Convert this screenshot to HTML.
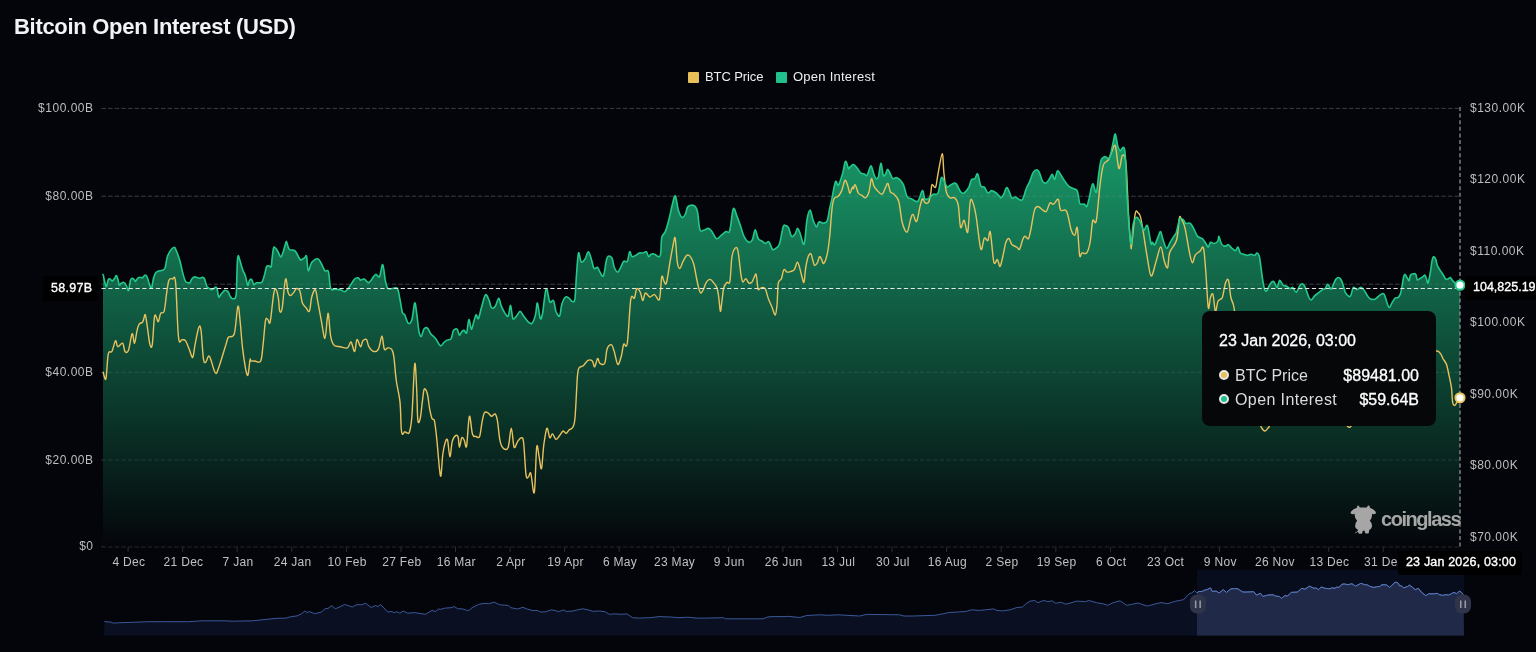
<!DOCTYPE html>
<html><head><meta charset="utf-8">
<style>
html,body{margin:0;padding:0;background:#04050a;width:1536px;height:652px;overflow:hidden;position:relative;font-family:"Liberation Sans",sans-serif;}
.t{position:absolute;white-space:nowrap;}
svg{will-change:transform}
.t{will-change:transform}
</style></head><body>
<svg width="1536" height="652" viewBox="0 0 1536 652" style="position:absolute;left:0;top:0">
<defs>
<linearGradient id="g" x1="0" y1="133" x2="0" y2="547" gradientUnits="userSpaceOnUse">
<stop offset="0" stop-color="#199c6b"/>
<stop offset="1" stop-color="#04050a"/>
</linearGradient>
<clipPath id="selclip"><rect x="1197" y="570" width="267" height="66"/></clipPath>
</defs>
<line x1="101.5" y1="108.40" x2="1460" y2="108.40" stroke="#27292e" stroke-width="1" stroke-dasharray="4.5,2.1"/>
<line x1="101.5" y1="196.20" x2="1460" y2="196.20" stroke="#27292e" stroke-width="1" stroke-dasharray="4.5,2.1"/>
<line x1="101.5" y1="284.20" x2="1460" y2="284.20" stroke="#27292e" stroke-width="1" stroke-dasharray="4.5,2.1"/>
<line x1="101.5" y1="372.30" x2="1460" y2="372.30" stroke="#27292e" stroke-width="1" stroke-dasharray="4.5,2.1"/>
<line x1="101.5" y1="460.00" x2="1460" y2="460.00" stroke="#27292e" stroke-width="1" stroke-dasharray="4.5,2.1"/>
<line x1="101.5" y1="546.80" x2="1460" y2="546.80" stroke="#27292e" stroke-width="1" stroke-dasharray="4.5,2.1"/>
<path d="M103.0,275.0 C103.0,275.0 102.9,273.6 103.2,275.0 C103.6,276.4 104.5,281.4 105.1,283.3 C105.6,285.2 105.9,287.1 106.4,286.5 C107.0,285.9 107.7,280.8 108.3,279.6 C108.9,278.4 109.4,278.9 110.1,279.1 C110.8,279.4 111.7,281.1 112.4,281.0 C113.2,280.8 114.1,279.1 114.7,278.2 C115.4,277.3 115.9,275.2 116.4,275.5 C116.9,275.7 117.5,278.0 118.0,279.6 C118.4,281.2 118.8,284.5 119.3,285.1 C119.9,285.7 120.4,283.7 121.2,283.3 C121.9,282.8 123.1,282.1 123.9,282.4 C124.8,282.7 125.5,283.7 126.2,285.1 C127.0,286.5 127.9,291.4 128.5,290.6 C129.2,289.9 129.8,282.6 130.4,280.5 C131.0,278.4 131.6,278.4 132.2,278.2 C132.8,278.1 133.5,279.1 134.1,279.6 C134.6,280.1 134.9,281.6 135.5,281.4 C136.0,281.3 136.6,279.4 137.3,278.7 C138.0,278.0 138.8,277.4 139.6,277.3 C140.4,277.1 141.4,278.1 142.4,277.8 C143.3,277.4 144.4,275.1 145.1,275.0 C145.9,274.8 146.2,275.1 147.0,276.8 C147.7,278.5 149.0,283.3 149.7,285.1 C150.5,287.0 151.0,289.0 151.6,287.9 C152.2,286.8 152.8,281.1 153.4,278.7 C154.0,276.3 154.5,274.8 155.2,273.6 C156.0,272.4 156.6,271.9 158.0,271.3 C159.4,270.7 162.3,270.7 163.5,269.9 C164.8,269.2 164.7,269.1 165.4,266.7 C166.1,264.3 166.3,258.9 167.7,255.7 C169.1,252.4 172.2,248.1 173.7,247.4 C175.1,246.6 175.4,248.7 176.4,251.0 C177.5,253.4 178.9,257.5 180.0,261.2 C181.1,264.9 181.8,269.8 182.8,273.1 C183.7,276.5 184.6,279.8 185.5,281.4 C186.4,283.0 187.5,282.7 188.3,282.8 C189.1,283.0 189.5,283.0 190.1,282.4 C190.7,281.7 191.2,279.6 192.0,278.7 C192.7,277.8 193.7,277.0 194.7,276.8 C195.7,276.7 197.0,277.5 198.0,277.8 C198.9,278.0 199.5,278.3 200.3,278.2 C201.0,278.1 201.9,277.2 202.6,277.3 C203.3,277.4 203.7,277.2 204.4,278.7 C205.1,280.1 206.0,284.5 206.7,286.0 C207.4,287.6 207.7,287.3 208.5,287.9 C209.4,288.5 210.8,289.6 211.8,289.7 C212.7,289.8 213.4,288.8 214.1,288.3 C214.8,287.9 215.4,286.7 215.9,287.0 C216.4,287.2 216.8,288.0 217.3,289.7 C217.8,291.4 218.1,296.3 218.7,297.1 C219.3,297.9 220.2,295.2 221.0,294.3 C221.7,293.4 222.6,292.3 223.3,291.6 C224.0,290.9 224.4,290.2 225.1,290.2 C225.9,290.2 227.0,290.6 227.9,291.6 C228.7,292.6 229.5,295.0 230.2,296.2 C230.9,297.3 231.2,298.2 232.0,298.5 C232.9,298.8 234.5,299.2 235.2,298.0 C236.0,296.9 236.0,297.4 236.4,291.6 C236.7,285.7 237.0,269.0 237.3,263.0 C237.6,257.0 237.8,256.1 238.2,255.7 C238.6,255.2 239.1,258.0 239.9,260.3 C240.6,262.6 241.7,266.9 242.6,269.5 C243.5,272.1 244.5,273.3 245.4,275.9 C246.2,278.5 247.0,284.4 247.7,285.1 C248.4,285.9 249.0,281.5 249.5,280.5 C250.1,279.5 250.4,279.1 250.9,279.1 C251.4,279.1 251.8,279.6 252.3,280.5 C252.7,281.4 253.0,284.3 253.7,284.7 C254.4,285.0 255.4,283.1 256.4,282.8 C257.5,282.5 259.1,283.0 260.1,282.8 C261.1,282.6 261.6,282.9 262.4,281.4 C263.2,280.0 264.0,276.5 264.7,274.1 C265.4,271.6 265.9,268.1 266.6,266.7 C267.2,265.3 268.1,265.8 268.9,265.8 C269.6,265.8 270.6,267.9 271.2,266.7 C271.7,265.5 271.7,261.5 272.1,258.4 C272.5,255.3 273.0,250.1 273.5,248.3 C273.9,246.4 274.2,246.9 274.8,247.4 C275.5,247.8 276.7,249.5 277.6,251.0 C278.5,252.6 279.6,256.0 280.4,256.6 C281.1,257.2 281.4,256.6 282.2,254.7 C283.0,252.9 284.3,247.8 285.0,245.5 C285.7,243.3 285.9,241.4 286.4,241.4 C286.8,241.4 287.2,244.1 287.7,245.5 C288.3,246.9 288.7,248.9 289.6,249.7 C290.5,250.4 292.2,249.7 293.3,250.1 C294.3,250.5 295.1,250.7 296.0,252.0 C296.9,253.2 298.1,256.3 298.8,257.5 C299.5,258.7 299.7,258.9 300.1,259.3 C300.5,259.7 300.3,260.3 301.1,260.0 C301.9,259.7 303.8,258.2 304.7,257.6 C305.6,257.0 306.0,254.2 306.6,256.4 C307.2,258.6 307.4,269.7 308.3,270.7 C309.1,271.7 310.2,264.3 311.8,262.3 C313.4,260.4 316.2,258.6 317.8,258.8 C319.3,259.0 320.1,261.5 321.3,263.5 C322.5,265.5 323.7,269.3 324.9,270.7 C326.1,272.1 327.5,268.9 328.5,271.9 C329.4,274.8 329.6,285.6 330.8,288.5 C332.0,291.4 334.0,289.0 335.6,289.2 C337.2,289.4 338.8,289.3 340.3,289.7 C341.9,290.1 343.5,292.2 345.1,291.6 C346.7,291.0 348.3,288.2 349.9,286.1 C351.4,284.0 353.2,280.4 354.6,279.0 C356.0,277.6 357.2,277.6 358.2,277.8 C359.2,278.0 359.6,280.0 360.6,280.2 C361.5,280.4 362.7,278.6 364.1,279.0 C365.5,279.4 367.3,282.9 368.9,282.6 C370.5,282.2 372.4,278.0 373.6,276.6 C374.8,275.2 375.0,274.2 376.0,274.2 C377.0,274.2 378.5,278.2 379.6,276.6 C380.7,275.0 381.7,263.9 382.7,264.7 C383.7,265.5 384.6,277.4 385.5,281.4 C386.4,285.3 386.7,287.3 387.9,288.5 C389.1,289.7 391.1,288.5 392.7,288.5 C394.2,288.5 396.2,286.7 397.4,288.5 C398.6,290.3 399.2,295.5 400.0,299.5 C400.8,303.5 401.6,310.0 402.4,312.6 C403.2,315.1 403.8,313.1 404.8,314.9 C405.7,316.7 407.1,322.5 408.3,323.3 C409.5,324.0 410.8,323.1 411.9,319.7 C413.0,316.3 413.9,304.2 414.7,303.0 C415.5,301.9 415.9,307.8 416.6,312.6 C417.4,317.3 418.2,327.6 419.0,331.6 C419.8,335.5 420.6,336.7 421.4,336.3 C422.2,335.9 422.8,330.6 423.8,329.2 C424.8,327.8 426.2,327.2 427.3,328.0 C428.5,328.8 429.5,332.2 430.9,333.9 C432.3,335.7 434.1,336.7 435.7,338.7 C437.2,340.7 439.0,345.2 440.4,345.8 C441.8,346.4 442.8,343.3 444.0,342.3 C445.2,341.3 446.4,340.5 447.6,339.9 C448.7,339.3 450.1,340.3 451.1,338.7 C452.1,337.1 452.5,332.0 453.5,330.4 C454.5,328.8 456.1,328.4 457.1,329.2 C458.1,330.0 458.6,334.7 459.4,335.1 C460.2,335.5 461.0,332.4 461.8,331.6 C462.6,330.8 463.4,330.2 464.2,330.4 C465.0,330.6 465.8,334.5 466.6,332.8 C467.4,331.0 468.2,320.3 468.9,319.7 C469.7,319.1 470.5,328.8 471.3,329.2 C472.1,329.6 472.9,324.4 473.7,322.1 C474.5,319.7 475.3,315.5 476.1,314.9 C476.9,314.3 477.5,320.1 478.5,318.5 C479.4,316.9 480.8,309.4 482.0,305.4 C483.2,301.5 484.4,295.5 485.6,294.7 C486.8,293.9 488.2,298.5 489.2,300.7 C490.1,302.8 490.5,306.8 491.5,307.8 C492.5,308.8 493.9,308.2 495.1,306.6 C496.3,305.0 497.7,298.5 498.7,298.3 C499.7,298.1 500.1,303.0 501.0,305.4 C502.0,307.8 503.4,310.8 504.6,312.6 C505.8,314.3 507.2,317.3 508.2,316.1 C509.2,314.9 509.8,305.0 510.6,305.4 C511.3,305.8 511.9,316.7 512.9,318.5 C513.9,320.3 515.3,317.3 516.5,316.1 C517.7,314.9 518.9,311.4 520.1,311.4 C521.3,311.4 522.2,314.3 523.6,316.1 C525.0,317.9 527.0,320.9 528.4,322.1 C529.8,323.3 530.8,324.4 532.0,323.3 C533.1,322.1 534.6,318.3 535.5,314.9 C536.4,311.6 536.6,302.4 537.4,303.0 C538.2,303.6 539.4,316.9 540.3,318.5 C541.1,320.1 541.7,317.5 542.7,312.6 C543.6,307.6 545.0,290.6 546.2,288.8 C547.4,287.0 548.6,299.9 549.8,301.9 C551.0,303.8 552.4,299.0 553.5,300.6 C554.5,302.2 554.9,308.7 555.9,311.3 C557.0,313.8 558.5,317.2 559.5,316.0 C560.5,314.8 560.9,307.3 561.9,304.1 C562.9,301.0 564.3,298.0 565.5,297.0 C566.6,296.0 567.8,297.4 569.0,298.2 C570.2,299.0 571.6,301.7 572.6,301.7 C573.6,301.7 574.3,302.9 575.0,298.2 C575.6,293.4 576.0,280.7 576.6,273.2 C577.2,265.7 577.8,255.0 578.5,253.0 C579.2,251.0 580.1,259.9 580.9,261.3 C581.7,262.7 582.5,261.9 583.3,261.3 C584.1,260.7 584.8,259.3 585.7,257.8 C586.5,256.2 587.5,251.4 588.5,251.8 C589.5,252.2 590.7,257.4 591.6,260.1 C592.5,262.9 593.0,267.3 594.0,268.5 C595.0,269.6 596.6,266.7 597.6,267.3 C598.5,267.9 598.9,270.6 599.9,272.0 C600.9,273.4 602.3,278.0 603.5,275.6 C604.7,273.2 605.7,260.7 607.1,257.8 C608.4,254.8 610.6,256.2 611.8,257.8 C613.0,259.3 613.2,264.9 614.2,267.3 C615.2,269.6 616.6,272.2 617.8,272.0 C618.9,271.8 620.3,267.9 621.3,266.1 C622.3,264.3 622.7,262.1 623.7,261.3 C624.7,260.5 626.3,262.9 627.3,261.3 C628.3,259.7 628.9,252.6 629.6,251.8 C630.4,251.0 631.0,256.0 632.0,256.6 C633.0,257.2 634.4,256.0 635.6,255.4 C636.8,254.8 638.0,253.4 639.2,253.0 C640.3,252.6 641.5,253.2 642.7,253.0 C643.9,252.8 645.3,251.2 646.3,251.8 C647.3,252.4 647.9,256.2 648.7,256.6 C649.5,257.0 650.1,254.6 651.0,254.2 C652.0,253.8 653.4,253.8 654.6,254.2 C655.8,254.6 657.2,256.6 658.2,256.6 C659.2,256.6 660.0,257.4 660.6,254.2 C661.2,251.0 661.0,241.3 661.7,237.6 C662.5,233.8 664.1,234.6 665.3,231.6 C666.5,228.6 667.7,224.3 668.9,219.7 C670.1,215.2 671.4,208.2 672.4,204.3 C673.5,200.3 674.3,195.0 675.3,195.9 C676.3,196.9 677.3,206.6 678.4,210.2 C679.5,213.8 680.8,216.7 682.0,217.3 C683.1,217.9 684.5,215.6 685.5,213.8 C686.5,212.0 686.5,208.0 687.9,206.6 C689.3,205.3 692.3,204.7 693.8,205.5 C695.4,206.2 696.4,207.4 697.4,211.4 C698.4,215.4 698.8,226.1 699.8,229.2 C700.8,232.4 702.1,230.5 703.6,230.3 C705.0,230.2 706.9,228.2 708.3,228.4 C709.7,228.6 710.5,229.8 711.9,231.5 C713.3,233.2 715.1,238.1 716.6,238.7 C718.2,239.3 719.8,236.3 721.4,235.1 C723.0,233.9 724.8,232.2 726.2,231.5 C727.5,230.8 728.5,234.6 729.7,230.8 C730.9,227.1 732.1,211.4 733.3,208.9 C734.5,206.5 735.7,213.3 736.9,216.1 C738.0,218.9 739.2,222.2 740.4,225.6 C741.6,229.0 742.6,233.5 744.0,236.3 C745.4,239.1 747.4,241.6 748.7,242.2 C750.1,242.8 751.2,241.9 752.3,239.9 C753.4,237.8 754.2,230.1 755.2,229.9 C756.1,229.7 757.1,236.8 758.3,238.7 C759.4,240.5 760.6,240.3 761.8,241.0 C763.0,241.8 764.2,243.3 765.4,243.4 C766.6,243.5 767.8,240.8 768.9,241.8 C770.1,242.8 771.3,248.3 772.5,249.4 C773.7,250.4 774.9,249.2 776.1,248.2 C777.3,247.2 778.5,247.0 779.6,243.4 C780.8,239.9 782.2,229.8 783.2,226.8 C784.2,223.8 784.7,225.5 785.6,225.6 C786.5,225.7 787.5,225.7 788.4,227.5 C789.4,229.3 790.4,235.2 791.5,236.3 C792.6,237.4 794.1,235.2 795.1,233.9 C796.1,232.6 796.7,228.6 797.5,228.4 C798.3,228.2 798.7,230.1 799.9,232.7 C801.0,235.3 802.9,246.3 804.1,244.1 C805.3,242.0 806.0,225.3 807.0,219.6 C808.0,214.0 809.1,210.1 810.1,210.1 C811.1,210.1 811.9,216.9 812.9,219.6 C814.0,222.4 815.5,226.4 816.5,226.8 C817.5,227.2 817.7,222.6 818.9,222.0 C820.1,221.4 822.2,223.4 823.6,223.2 C825.0,223.0 826.2,223.2 827.2,220.8 C828.2,218.5 828.8,212.7 829.6,208.9 C830.4,205.2 831.0,202.8 832.0,198.3 C832.9,193.7 834.5,183.8 835.5,181.6 C836.6,179.4 837.2,186.6 838.4,185.2 C839.6,183.8 841.5,177.2 842.7,173.3 C843.8,169.3 844.5,162.2 845.5,161.4 C846.5,160.6 847.8,167.6 848.6,168.5 C849.3,169.4 849.6,167.2 850.0,166.9 C850.4,166.5 850.4,166.5 851.0,166.2 C851.6,165.8 852.5,164.2 853.6,164.5 C854.6,164.8 855.9,166.7 857.1,168.0 C858.3,169.4 859.5,171.8 860.7,172.8 C861.9,173.8 863.2,173.6 864.3,174.0 C865.3,174.4 866.0,176.6 867.1,175.2 C868.2,173.8 869.8,165.9 870.9,165.7 C872.0,165.5 872.9,171.8 873.8,174.0 C874.6,176.2 875.4,178.3 876.2,178.7 C876.9,179.1 877.7,178.9 878.5,176.4 C879.3,173.8 880.1,163.5 880.9,163.3 C881.7,163.1 882.5,173.4 883.3,175.2 C884.1,177.0 885.0,175.0 885.7,174.0 C886.4,173.0 886.8,169.2 887.6,169.2 C888.4,169.2 889.5,172.4 890.4,174.0 C891.3,175.6 891.8,178.1 892.8,178.7 C893.8,179.3 895.2,177.4 896.4,177.6 C897.6,177.7 898.7,178.7 899.9,179.9 C901.1,181.1 902.3,181.9 903.5,184.7 C904.7,187.5 905.7,194.2 907.1,196.6 C908.4,198.9 910.0,198.2 911.8,198.9 C913.6,199.7 916.0,202.7 917.8,201.3 C919.5,199.9 921.3,191.0 922.5,190.6 C923.7,190.2 923.7,197.8 924.9,198.9 C926.1,200.1 928.3,198.6 929.6,197.8 C931.0,197.0 931.8,195.0 933.2,194.2 C934.6,193.4 936.6,195.8 938.0,193.0 C939.4,190.2 940.3,179.1 941.5,177.6 C942.7,176.0 944.1,181.9 945.1,183.5 C946.1,185.1 946.5,186.9 947.5,187.1 C948.5,187.3 949.7,185.3 951.0,184.7 C952.4,184.1 954.2,182.3 955.8,183.5 C957.4,184.7 959.2,190.2 960.6,191.8 C961.9,193.4 962.7,193.8 964.1,193.0 C965.5,192.2 967.7,189.2 968.9,187.1 C970.1,184.9 970.3,181.3 971.3,179.9 C972.2,178.5 973.8,179.7 974.8,178.7 C975.9,177.7 976.7,172.8 977.7,174.0 C978.7,175.2 979.7,183.7 980.8,185.9 C981.9,188.1 983.1,185.9 984.3,187.1 C985.5,188.3 986.7,192.4 987.9,193.0 C989.1,193.6 990.1,190.6 991.5,190.6 C992.9,190.6 994.8,191.9 996.2,193.0 C997.6,194.1 999.2,196.2 1000.0,197.0 C1000.8,197.8 1000.4,198.2 1001.0,197.8 C1001.6,197.4 1002.6,196.4 1003.6,194.6 C1004.5,192.9 1005.7,187.9 1006.7,187.5 C1007.6,187.1 1008.6,190.5 1009.5,192.3 C1010.4,194.1 1010.9,197.4 1011.9,198.2 C1012.9,199.0 1014.3,196.8 1015.5,197.0 C1016.6,197.2 1017.8,199.0 1019.0,199.4 C1020.2,199.8 1021.4,201.2 1022.6,199.4 C1023.8,197.6 1025.0,191.7 1026.2,188.7 C1027.3,185.7 1028.5,184.3 1029.7,181.6 C1030.9,178.8 1032.1,174.0 1033.3,172.1 C1034.5,170.1 1035.9,169.7 1036.9,169.7 C1037.8,169.7 1038.2,170.1 1039.2,172.1 C1040.2,174.0 1041.6,179.8 1042.8,181.6 C1044.0,183.4 1045.2,183.4 1046.4,182.8 C1047.6,182.2 1048.9,179.4 1049.9,178.0 C1050.9,176.6 1051.5,174.2 1052.3,174.4 C1053.1,174.6 1053.8,179.8 1054.7,179.2 C1055.6,178.6 1056.5,171.7 1057.5,170.9 C1058.5,170.1 1059.5,172.9 1060.6,174.4 C1061.7,176.0 1062.8,178.4 1064.2,180.4 C1065.6,182.4 1067.4,184.9 1068.9,186.3 C1070.5,187.7 1072.3,187.9 1073.7,188.7 C1075.1,189.5 1076.3,188.7 1077.3,191.1 C1078.3,193.5 1078.9,200.8 1079.6,203.0 C1080.4,205.1 1081.2,204.0 1082.0,204.2 C1082.8,204.4 1083.6,203.8 1084.4,204.2 C1085.2,204.6 1086.0,207.5 1086.8,206.5 C1087.6,205.5 1088.2,202.0 1089.2,198.2 C1090.1,194.4 1091.5,184.9 1092.7,183.9 C1093.9,183.0 1095.3,193.9 1096.3,192.3 C1097.3,190.7 1097.9,179.8 1098.7,174.4 C1099.5,169.1 1100.1,163.1 1101.0,160.2 C1102.0,157.2 1103.2,157.0 1104.6,156.6 C1106.0,156.2 1108.0,160.0 1109.4,157.8 C1110.8,155.6 1111.9,147.5 1112.9,143.5 C1113.9,139.6 1114.5,133.6 1115.3,134.0 C1116.1,134.4 1116.9,143.1 1117.7,145.9 C1118.5,148.7 1118.9,149.9 1120.1,150.7 C1121.3,151.5 1123.6,142.7 1124.8,150.7 C1126.0,158.6 1126.2,182.8 1127.2,198.2 C1128.2,213.7 1129.8,239.0 1130.8,243.4 C1131.8,247.7 1132.2,228.7 1133.1,224.4 C1134.1,220.0 1135.5,217.6 1136.7,217.2 C1137.9,216.8 1139.1,219.8 1140.3,222.0 C1141.5,224.2 1142.7,229.7 1143.8,230.3 C1145.0,230.9 1146.2,223.4 1147.4,225.6 C1148.6,227.7 1150.1,240.6 1151.0,243.4 C1151.8,246.2 1151.7,242.1 1152.4,242.3 C1153.0,242.5 1153.8,245.7 1154.8,244.7 C1155.7,243.7 1157.3,238.5 1158.3,236.4 C1159.3,234.2 1159.9,231.0 1160.7,231.6 C1161.5,232.2 1162.1,237.2 1163.1,239.9 C1164.1,242.7 1165.5,247.9 1166.6,248.3 C1167.8,248.6 1169.0,244.3 1170.2,242.3 C1171.4,240.3 1172.8,237.9 1173.8,236.4 C1174.8,234.8 1175.4,235.0 1176.2,232.8 C1176.9,230.6 1177.9,225.7 1178.5,223.3 C1179.1,220.9 1178.9,219.1 1179.7,218.5 C1180.5,217.9 1182.3,218.9 1183.3,219.7 C1184.3,220.5 1184.5,222.7 1185.7,223.3 C1186.9,223.9 1189.0,222.3 1190.4,223.3 C1191.8,224.3 1192.8,227.1 1194.0,229.2 C1195.2,231.4 1196.2,234.8 1197.6,236.4 C1198.9,237.9 1200.9,237.6 1202.3,238.7 C1203.7,239.9 1204.9,242.1 1205.9,243.5 C1206.9,244.9 1207.5,247.3 1208.3,247.1 C1209.0,246.9 1209.6,242.9 1210.6,242.3 C1211.6,241.7 1213.0,243.7 1214.2,243.5 C1215.4,243.3 1217.0,242.3 1217.8,241.1 C1218.6,239.9 1218.4,236.0 1218.9,236.4 C1219.5,236.8 1220.5,241.9 1221.3,243.5 C1222.1,245.1 1222.9,245.5 1223.7,245.9 C1224.5,246.3 1225.3,246.1 1226.1,245.9 C1226.9,245.7 1227.5,244.3 1228.5,244.7 C1229.4,245.1 1230.8,247.3 1232.0,248.3 C1233.2,249.2 1234.6,250.8 1235.6,250.6 C1236.6,250.4 1237.2,246.7 1238.0,247.1 C1238.8,247.5 1239.4,251.8 1240.3,253.0 C1241.3,254.2 1242.7,253.8 1243.9,254.2 C1245.1,254.6 1246.3,255.4 1247.5,255.4 C1248.7,255.4 1249.9,254.2 1251.0,254.2 C1252.2,254.2 1253.6,255.6 1254.6,255.4 C1255.6,255.2 1256.2,252.8 1257.0,253.0 C1257.8,253.2 1258.6,253.2 1259.4,256.6 C1260.2,259.9 1261.0,268.1 1261.7,273.2 C1262.5,278.4 1263.3,284.5 1264.1,287.5 C1264.9,290.5 1265.5,291.6 1266.5,291.0 C1267.5,290.5 1268.9,285.5 1270.1,283.9 C1271.3,282.3 1272.4,280.9 1273.6,281.5 C1274.8,282.1 1276.2,287.7 1277.2,287.5 C1278.2,287.3 1278.6,280.7 1279.6,280.3 C1280.6,280.0 1282.0,284.1 1283.1,285.1 C1284.3,286.1 1285.5,285.7 1286.7,286.3 C1287.9,286.9 1289.3,288.5 1290.3,288.7 C1291.3,288.9 1291.7,286.9 1292.7,287.5 C1293.6,288.1 1295.0,292.6 1296.2,292.2 C1297.4,291.9 1298.9,286.8 1299.9,285.4 C1300.9,283.9 1301.5,283.6 1302.3,283.7 C1303.1,283.7 1303.8,284.5 1304.6,286.0 C1305.4,287.4 1306.1,290.0 1306.9,292.1 C1307.7,294.1 1308.4,296.9 1309.2,298.2 C1310.0,299.5 1310.6,300.1 1311.5,299.8 C1312.4,299.4 1313.4,297.1 1314.6,295.9 C1315.7,294.8 1317.1,293.9 1318.4,292.9 C1319.7,291.8 1321.1,290.6 1322.2,289.8 C1323.4,289.0 1324.4,289.1 1325.3,288.3 C1326.2,287.4 1326.8,284.5 1327.6,284.4 C1328.4,284.3 1329.3,286.7 1329.9,287.5 C1330.5,288.3 1330.8,289.7 1331.4,289.0 C1332.1,288.4 1333.0,285.3 1333.7,283.7 C1334.5,282.0 1335.3,280.1 1336.0,279.0 C1336.8,278.0 1337.6,277.5 1338.3,277.5 C1339.1,277.5 1339.9,277.9 1340.6,279.0 C1341.4,280.2 1342.2,282.2 1342.9,284.4 C1343.7,286.6 1344.4,290.2 1345.2,292.1 C1346.1,294.0 1347.4,295.3 1348.3,295.9 C1349.2,296.6 1349.8,297.2 1350.6,295.9 C1351.4,294.6 1352.3,289.7 1352.9,288.3 C1353.6,286.8 1353.8,287.2 1354.4,287.5 C1355.1,287.7 1356.0,289.7 1356.7,289.8 C1357.5,289.9 1358.3,288.6 1359.0,288.3 C1359.8,287.9 1360.5,287.1 1361.3,287.5 C1362.2,287.9 1363.4,289.1 1364.4,290.6 C1365.4,292.0 1366.5,294.5 1367.5,295.9 C1368.5,297.3 1369.3,298.5 1370.6,299.0 C1371.8,299.5 1373.6,299.6 1375.2,299.0 C1376.7,298.3 1378.3,296.0 1379.8,295.2 C1381.2,294.3 1382.6,293.0 1383.6,293.6 C1384.6,294.3 1385.0,296.7 1385.9,299.0 C1386.8,301.3 1387.9,306.8 1389.0,307.4 C1390.0,308.1 1391.0,304.4 1392.0,302.8 C1393.0,301.3 1394.1,299.1 1395.1,298.2 C1396.1,297.3 1397.3,298.2 1398.2,297.5 C1399.1,296.7 1399.8,295.4 1400.5,293.6 C1401.1,291.8 1401.5,289.4 1402.0,286.7 C1402.5,284.0 1403.0,279.6 1403.5,277.5 C1404.0,275.5 1404.4,274.3 1405.1,274.4 C1405.7,274.6 1406.7,277.3 1407.4,278.3 C1408.1,279.3 1408.7,281.1 1409.2,280.6 C1409.7,280.1 1409.7,276.4 1410.4,275.2 C1411.1,274.1 1412.6,273.8 1413.5,273.7 C1414.4,273.6 1415.2,273.4 1415.8,274.4 C1416.4,275.5 1416.6,279.2 1417.3,279.8 C1418.1,280.5 1419.5,278.8 1420.4,278.3 C1421.3,277.8 1421.9,277.3 1422.7,276.7 C1423.5,276.2 1424.4,274.8 1425.0,275.2 C1425.6,275.6 1426.0,277.8 1426.5,279.0 C1427.0,280.3 1427.4,284.0 1428.1,282.9 C1428.7,281.7 1429.7,275.7 1430.4,272.1 C1431.0,268.6 1431.4,264.0 1431.9,261.4 C1432.4,258.9 1432.8,257.2 1433.4,256.8 C1434.1,256.4 1435.1,257.7 1435.7,259.1 C1436.4,260.5 1436.5,263.3 1437.3,265.2 C1438.0,267.2 1439.3,269.0 1440.3,270.6 C1441.4,272.3 1442.5,273.8 1443.4,275.2 C1444.3,276.6 1444.9,278.4 1445.7,279.0 C1446.5,279.7 1447.2,279.3 1448.0,279.0 C1448.8,278.8 1449.5,277.3 1450.3,277.5 C1451.1,277.8 1451.8,279.7 1452.6,280.6 C1453.4,281.5 1453.8,282.1 1454.9,282.9 C1456.1,283.7 1458.7,284.8 1459.5,285.2 C1460.4,285.6 1459.9,285.2 1460.0,285.2 L1460,547 L103,547 Z" fill="url(#g)"/>
<line x1="101.5" y1="108.40" x2="1460" y2="108.40" stroke="rgba(255,255,255,0.1)" stroke-width="1" stroke-dasharray="4.5,2.1"/>
<line x1="101.5" y1="196.20" x2="1460" y2="196.20" stroke="rgba(255,255,255,0.1)" stroke-width="1" stroke-dasharray="4.5,2.1"/>
<line x1="101.5" y1="284.20" x2="1460" y2="284.20" stroke="rgba(255,255,255,0.1)" stroke-width="1" stroke-dasharray="4.5,2.1"/>
<line x1="101.5" y1="372.30" x2="1460" y2="372.30" stroke="rgba(255,255,255,0.1)" stroke-width="1" stroke-dasharray="4.5,2.1"/>
<line x1="101.5" y1="460.00" x2="1460" y2="460.00" stroke="rgba(255,255,255,0.1)" stroke-width="1" stroke-dasharray="4.5,2.1"/>
<line x1="101.5" y1="546.80" x2="1460" y2="546.80" stroke="rgba(255,255,255,0.1)" stroke-width="1" stroke-dasharray="4.5,2.1"/>
<line x1="128.1" y1="547" x2="128.1" y2="552" stroke="#2a2d33" stroke-width="1"/>
<line x1="182.7" y1="547" x2="182.7" y2="552" stroke="#2a2d33" stroke-width="1"/>
<line x1="237.2" y1="547" x2="237.2" y2="552" stroke="#2a2d33" stroke-width="1"/>
<line x1="291.8" y1="547" x2="291.8" y2="552" stroke="#2a2d33" stroke-width="1"/>
<line x1="346.4" y1="547" x2="346.4" y2="552" stroke="#2a2d33" stroke-width="1"/>
<line x1="401.0" y1="547" x2="401.0" y2="552" stroke="#2a2d33" stroke-width="1"/>
<line x1="455.5" y1="547" x2="455.5" y2="552" stroke="#2a2d33" stroke-width="1"/>
<line x1="510.1" y1="547" x2="510.1" y2="552" stroke="#2a2d33" stroke-width="1"/>
<line x1="564.7" y1="547" x2="564.7" y2="552" stroke="#2a2d33" stroke-width="1"/>
<line x1="619.2" y1="547" x2="619.2" y2="552" stroke="#2a2d33" stroke-width="1"/>
<line x1="673.8" y1="547" x2="673.8" y2="552" stroke="#2a2d33" stroke-width="1"/>
<line x1="728.4" y1="547" x2="728.4" y2="552" stroke="#2a2d33" stroke-width="1"/>
<line x1="782.9" y1="547" x2="782.9" y2="552" stroke="#2a2d33" stroke-width="1"/>
<line x1="837.5" y1="547" x2="837.5" y2="552" stroke="#2a2d33" stroke-width="1"/>
<line x1="892.1" y1="547" x2="892.1" y2="552" stroke="#2a2d33" stroke-width="1"/>
<line x1="946.6" y1="547" x2="946.6" y2="552" stroke="#2a2d33" stroke-width="1"/>
<line x1="1001.2" y1="547" x2="1001.2" y2="552" stroke="#2a2d33" stroke-width="1"/>
<line x1="1055.8" y1="547" x2="1055.8" y2="552" stroke="#2a2d33" stroke-width="1"/>
<line x1="1110.4" y1="547" x2="1110.4" y2="552" stroke="#2a2d33" stroke-width="1"/>
<line x1="1164.9" y1="547" x2="1164.9" y2="552" stroke="#2a2d33" stroke-width="1"/>
<line x1="1219.5" y1="547" x2="1219.5" y2="552" stroke="#2a2d33" stroke-width="1"/>
<line x1="1274.1" y1="547" x2="1274.1" y2="552" stroke="#2a2d33" stroke-width="1"/>
<line x1="1328.6" y1="547" x2="1328.6" y2="552" stroke="#2a2d33" stroke-width="1"/>
<line x1="1383.2" y1="547" x2="1383.2" y2="552" stroke="#2a2d33" stroke-width="1"/>
<path d="M103.0,371.7 C103.5,372.9 105.1,381.8 105.9,378.8 C106.8,375.9 107.3,358.4 108.3,353.9 C109.3,349.3 110.7,353.7 111.9,351.5 C113.1,349.3 114.5,341.6 115.5,340.8 C116.4,340.0 116.6,346.3 117.8,346.7 C119.0,347.1 121.4,342.4 122.6,343.2 C123.8,344.0 124.0,350.3 125.0,351.5 C126.0,352.7 127.3,353.3 128.5,350.3 C129.7,347.3 131.1,334.9 132.1,333.7 C133.1,332.5 133.7,343.6 134.5,343.2 C135.3,342.8 136.1,334.5 136.9,331.3 C137.6,328.1 138.2,325.7 139.2,324.2 C140.2,322.6 141.8,323.4 142.8,321.8 C143.8,320.2 144.5,314.1 145.2,314.6 C145.9,315.2 146.3,320.4 147.1,325.3 C147.9,330.3 149.1,341.2 149.9,344.4 C150.8,347.5 151.5,349.1 152.3,344.4 C153.1,339.6 153.7,319.6 154.7,315.8 C155.7,312.1 157.3,322.2 158.3,321.8 C159.2,321.4 159.6,315.2 160.6,313.5 C161.6,311.7 163.2,314.4 164.2,311.1 C165.2,307.7 165.8,298.4 166.6,293.3 C167.4,288.1 168.0,282.6 168.9,280.2 C169.9,277.8 171.4,278.6 172.5,279.0 C173.6,279.4 174.6,272.8 175.6,282.6 C176.6,292.3 177.4,327.7 178.5,337.2 C179.5,346.7 180.8,339.0 182.0,339.6 C183.2,340.2 184.4,339.2 185.6,340.8 C186.8,342.4 188.0,346.3 189.2,349.1 C190.3,351.9 191.7,358.2 192.7,357.4 C193.7,356.7 194.1,349.3 195.1,344.4 C196.1,339.4 197.7,330.1 198.7,327.7 C199.7,325.3 200.3,325.0 201.0,330.1 C201.8,335.3 202.6,353.3 203.4,358.6 C204.2,364.0 204.8,362.6 205.8,362.2 C206.8,361.8 207.8,354.5 209.4,356.3 C211.0,358.0 213.7,371.1 215.3,372.9 C216.9,374.7 217.1,371.7 218.9,367.0 C220.7,362.2 224.4,349.3 226.0,344.4 C227.6,339.4 227.0,339.0 228.4,337.2 C229.8,335.5 232.7,338.8 234.3,333.7 C235.9,328.5 236.9,308.1 237.9,306.3 C238.9,304.5 239.5,315.8 240.3,323.0 C241.1,330.1 241.5,340.4 242.7,349.1 C243.8,357.8 246.2,373.5 247.4,375.3 C248.6,377.1 249.4,362.2 250.0,359.8 C250.6,357.4 250.2,360.8 251.0,361.0 C251.8,361.2 253.1,361.0 254.8,361.0 C256.4,361.0 259.3,363.8 260.7,361.0 C262.1,358.2 262.3,351.1 263.1,344.4 C263.9,337.6 264.7,324.8 265.5,320.6 C266.2,316.4 267.0,319.2 267.8,319.4 C268.6,319.6 269.2,326.1 270.2,321.8 C271.2,317.4 272.8,298.6 273.8,293.3 C274.8,287.9 275.4,288.7 276.2,289.7 C276.9,290.7 277.9,295.6 278.5,299.2 C279.1,302.8 279.1,309.5 279.7,311.1 C280.3,312.7 281.3,312.9 282.1,308.7 C282.9,304.5 283.8,291.1 284.5,286.1 C285.1,281.2 285.5,278.0 286.1,279.0 C286.7,280.0 287.3,289.3 288.0,292.1 C288.8,294.8 289.4,295.6 290.4,295.6 C291.4,295.6 293.0,293.3 294.0,292.1 C295.0,290.9 295.4,288.7 296.4,288.5 C297.4,288.3 298.9,288.5 299.9,290.9 C300.9,293.3 301.3,300.0 302.3,302.8 C303.3,305.5 304.7,306.1 305.9,307.5 C307.1,308.9 308.4,312.9 309.4,311.1 C310.4,309.3 310.8,300.4 311.8,296.8 C312.8,293.3 314.4,288.9 315.4,289.7 C316.4,290.5 316.8,296.4 317.8,301.6 C318.8,306.7 320.1,314.4 321.3,320.6 C322.5,326.7 323.9,338.8 324.9,338.4 C325.9,338.0 326.7,322.2 327.3,318.2 C327.9,314.3 327.9,311.5 328.5,314.6 C329.1,317.8 329.8,332.1 330.8,337.2 C331.8,342.4 332.8,344.0 334.4,345.6 C336.0,347.1 338.2,346.3 340.3,346.7 C342.5,347.1 345.7,348.7 347.5,347.9 C349.3,347.1 349.9,341.4 351.0,342.0 C352.2,342.6 353.6,351.9 354.6,351.5 C355.6,351.1 356.0,340.4 357.0,339.6 C358.0,338.8 359.6,346.5 360.6,346.7 C361.5,346.9 361.9,342.0 362.9,340.8 C363.9,339.6 365.5,338.6 366.5,339.6 C367.5,340.6 367.7,344.8 368.9,346.7 C370.1,348.7 372.0,351.1 373.6,351.5 C375.2,351.9 377.0,351.7 378.4,349.1 C379.8,346.5 381.0,336.0 382.0,336.0 C382.9,336.0 383.3,347.1 384.3,349.1 C385.3,351.1 386.7,347.9 387.9,347.9 C389.1,347.9 390.5,347.7 391.5,349.1 C392.5,350.5 393.0,351.1 393.8,356.3 C394.6,361.4 395.2,372.4 396.2,380.0 C397.2,387.7 399.2,394.0 400.0,402.1 C400.8,410.1 400.8,422.9 401.2,428.2 C401.6,433.6 401.8,433.6 402.4,434.2 C403.0,434.8 404.0,432.0 404.8,431.8 C405.5,431.6 406.3,433.0 407.1,433.0 C407.9,433.0 408.7,434.6 409.5,431.8 C410.3,429.0 411.0,427.6 411.9,416.3 C412.8,405.0 413.9,368.8 414.7,364.0 C415.5,359.3 416.1,378.5 416.6,387.8 C417.2,397.1 417.2,414.7 417.8,419.9 C418.4,425.0 419.4,422.1 420.2,418.7 C421.0,415.3 421.9,404.6 422.6,399.7 C423.3,394.7 423.5,390.0 424.3,389.0 C425.0,388.0 426.4,390.4 427.3,393.7 C428.3,397.1 428.9,405.0 429.7,409.2 C430.5,413.4 431.3,416.7 432.1,418.7 C432.9,420.7 433.7,417.5 434.5,421.1 C435.3,424.6 436.1,432.6 436.9,440.1 C437.6,447.6 438.6,460.3 439.2,466.3 C439.9,472.2 440.3,477.7 440.9,475.8 C441.5,473.8 442.1,459.9 442.8,454.4 C443.5,448.8 444.4,444.9 445.2,442.5 C446.0,440.1 446.8,437.7 447.6,440.1 C448.3,442.5 449.1,456.5 449.9,456.7 C450.7,456.9 451.3,444.9 452.3,441.3 C453.3,437.7 454.9,435.9 455.9,435.3 C456.9,434.8 457.7,435.7 458.3,437.7 C458.8,439.7 458.8,447.2 459.4,447.2 C460.0,447.2 461.0,438.9 461.8,437.7 C462.6,436.5 463.4,438.7 464.2,440.1 C465.0,441.5 465.7,450.0 466.6,446.0 C467.4,442.1 468.4,418.3 469.4,416.3 C470.4,414.3 471.4,430.8 472.5,434.2 C473.6,437.5 474.9,436.1 476.1,436.5 C477.3,436.9 478.7,438.9 479.6,436.5 C480.6,434.2 481.2,426.2 482.0,422.3 C482.8,418.3 483.4,414.3 484.4,412.8 C485.4,411.2 486.8,412.2 488.0,412.8 C489.2,413.4 490.3,416.1 491.5,416.3 C492.7,416.5 494.1,413.2 495.1,413.9 C496.1,414.7 496.7,416.7 497.5,421.1 C498.3,425.4 498.9,435.5 499.9,440.1 C500.8,444.7 502.0,447.2 503.4,448.4 C504.8,449.6 506.9,450.6 508.2,447.2 C509.5,443.9 510.3,428.2 511.3,428.2 C512.3,428.2 513.1,445.1 514.1,447.2 C515.2,449.4 516.5,442.9 517.7,441.3 C518.9,439.7 520.3,437.5 521.3,437.7 C522.2,437.9 522.8,436.3 523.6,442.5 C524.4,448.6 525.2,468.8 526.0,474.6 C526.8,480.3 527.6,477.2 528.4,477.0 C529.2,476.8 529.8,470.8 530.8,473.4 C531.8,476.0 533.3,496.8 534.3,492.4 C535.3,488.0 535.9,453.2 536.7,447.2 C537.5,441.3 538.3,453.2 539.1,456.7 C539.9,460.3 540.7,470.6 541.5,468.6 C542.3,466.7 542.9,451.6 543.8,444.9 C544.8,438.1 545.9,429.4 546.9,428.2 C547.9,427.0 548.9,436.8 549.8,437.7 C550.7,438.7 551.5,433.5 552.5,433.8 C553.5,434.1 554.8,439.0 555.9,439.4 C557.1,439.7 558.3,437.2 559.5,435.8 C560.7,434.4 562.0,431.4 563.1,431.0 C564.2,430.6 565.2,433.6 566.2,433.4 C567.2,433.2 568.0,430.8 569.0,429.9 C570.1,428.9 571.6,429.5 572.6,427.5 C573.6,425.5 574.2,426.3 575.0,418.0 C575.8,409.6 576.7,385.9 577.3,377.6 C578.0,369.2 578.0,370.0 579.0,368.0 C580.0,366.1 581.8,366.9 583.3,365.7 C584.8,364.4 586.5,361.2 588.0,360.4 C589.5,359.6 591.2,359.8 592.3,360.9 C593.4,362.0 593.8,367.2 594.7,366.9 C595.6,366.5 596.7,359.1 597.6,358.5 C598.4,357.9 598.7,362.5 599.9,363.3 C601.1,364.1 603.5,365.7 604.7,363.3 C605.9,360.9 606.0,352.1 607.1,349.0 C608.2,345.9 610.2,344.3 611.3,344.7 C612.5,345.1 613.1,348.1 614.2,351.4 C615.3,354.7 616.6,363.7 617.8,364.5 C618.9,365.3 620.3,359.5 621.3,356.2 C622.3,352.8 622.7,346.4 623.7,344.3 C624.7,342.1 626.1,350.6 627.3,343.1 C628.5,335.6 629.6,306.9 630.8,299.4 C632.0,291.9 633.4,300.0 634.4,298.2 C635.4,296.4 635.8,289.7 636.8,288.7 C637.8,287.7 639.4,290.3 640.3,292.2 C641.3,294.2 641.9,300.4 642.7,300.6 C643.5,300.8 644.3,294.4 645.1,293.4 C645.9,292.4 646.7,294.0 647.5,294.6 C648.3,295.2 648.7,297.0 649.9,297.0 C651.0,297.0 653.0,294.2 654.6,294.6 C656.2,295.0 658.2,302.3 659.4,299.4 C660.6,296.4 661.0,279.8 661.7,276.8 C662.5,273.8 663.3,280.5 664.1,281.5 C664.9,282.5 665.5,286.1 666.5,282.7 C667.5,279.4 668.9,268.1 670.1,261.3 C671.3,254.6 672.8,246.1 673.6,242.3 C674.5,238.5 674.7,235.6 675.3,238.7 C675.9,241.9 676.5,256.4 677.2,261.3 C677.9,266.3 678.6,268.5 679.6,268.5 C680.6,268.5 682.0,263.5 683.1,261.3 C684.3,259.1 685.5,256.2 686.7,255.4 C687.9,254.6 689.1,255.1 690.3,256.6 C691.5,258.0 692.6,260.1 693.8,264.2 C694.9,268.2 696.1,276.6 697.1,281.0 C698.0,285.4 698.8,288.7 699.5,290.7 C700.2,292.8 700.4,293.4 701.0,293.2 C701.7,292.9 702.6,291.1 703.5,289.3 C704.4,287.4 705.4,283.5 706.6,281.9 C707.7,280.3 709.0,279.2 710.2,279.4 C711.5,279.7 712.8,281.7 713.9,283.1 C715.1,284.6 716.2,285.6 717.0,288.0 C717.8,290.5 718.3,294.0 718.8,297.9 C719.4,301.7 719.9,310.7 720.4,311.3 C720.9,312.0 721.3,305.4 721.9,301.5 C722.5,297.6 722.9,291.2 723.7,288.0 C724.6,284.9 725.8,283.6 726.8,282.5 C727.8,281.4 729.0,285.5 729.9,281.3 C730.7,277.0 731.1,262.4 731.9,257.0 C732.7,251.6 733.5,250.2 734.5,248.9 C735.4,247.6 736.7,246.5 737.6,249.4 C738.5,252.2 739.4,261.8 739.9,266.0 C740.5,270.2 740.5,271.9 740.9,274.5 C741.4,277.2 741.9,281.2 742.8,281.9 C743.6,282.6 744.8,278.6 745.8,278.8 C746.9,279.0 747.9,282.6 748.9,283.1 C749.9,283.6 751.1,282.7 752.0,281.9 C752.8,281.1 753.1,279.6 753.8,278.2 C754.5,276.9 755.4,273.7 755.9,273.9 C756.4,274.1 756.5,276.9 756.9,279.4 C757.2,282.0 757.6,287.7 758.1,289.3 C758.6,290.8 759.1,289.0 759.9,288.7 C760.8,288.3 762.1,287.3 763.0,287.4 C763.9,287.5 764.5,287.3 765.5,289.3 C766.4,291.2 767.4,296.0 768.5,299.1 C769.7,302.1 771.1,305.0 772.2,307.7 C773.3,310.3 774.5,315.6 775.3,315.0 C776.1,314.4 776.6,309.3 777.1,304.0 C777.6,298.7 777.6,287.3 778.3,283.1 C779.1,278.9 780.5,281.1 781.4,278.8 C782.3,276.6 782.9,270.8 783.9,269.6 C784.8,268.5 785.8,271.8 786.9,272.1 C788.1,272.4 789.4,271.9 790.6,271.5 C791.8,271.1 793.2,271.2 794.3,269.6 C795.4,268.1 796.4,262.5 797.4,262.3 C798.3,262.1 799.0,265.7 799.8,268.4 C800.6,271.1 801.6,276.0 802.3,278.2 C803.0,280.5 803.5,283.9 804.1,281.9 C804.7,279.9 805.2,270.2 806.0,266.0 C806.7,261.7 807.6,258.2 808.4,256.1 C809.2,254.1 810.1,253.1 810.9,253.7 C811.6,254.3 812.1,257.9 812.7,259.8 C813.3,261.8 813.7,264.9 814.5,265.3 C815.4,265.7 816.8,263.7 817.6,262.3 C818.4,260.8 818.8,257.4 819.4,256.7 C820.1,256.1 820.6,257.5 821.3,258.6 C822.0,259.7 822.8,264.2 823.7,263.5 C824.7,262.8 826.2,258.5 827.2,254.1 C828.2,249.8 828.8,245.0 829.6,237.5 C830.4,230.0 831.2,215.5 832.0,208.9 C832.7,202.4 833.3,200.3 834.3,198.3 C835.3,196.2 836.7,197.8 837.9,196.6 C839.1,195.4 840.3,193.8 841.5,191.1 C842.7,188.4 844.0,181.2 845.0,180.4 C846.1,179.6 847.1,184.2 847.9,186.4 C848.7,188.5 849.1,193.1 849.9,193.3 C850.6,193.4 851.8,187.8 852.4,187.1 C853.0,186.3 852.9,189.1 853.4,188.7 C853.8,188.3 854.4,184.0 855.2,184.7 C856.1,185.4 857.2,191.2 858.3,193.0 C859.4,194.8 860.7,194.6 861.9,195.4 C863.1,196.2 864.3,198.4 865.5,197.8 C866.6,197.2 868.0,195.0 869.0,191.8 C870.0,188.6 870.6,179.7 871.4,178.7 C872.2,177.7 872.8,183.9 873.8,185.9 C874.8,187.9 876.0,189.2 877.3,190.6 C878.7,192.0 880.7,194.8 882.1,194.2 C883.5,193.6 884.7,188.8 885.7,187.1 C886.7,185.3 887.2,182.7 888.0,183.5 C888.8,184.3 889.4,190.0 890.4,191.8 C891.4,193.6 892.6,192.6 894.0,194.2 C895.4,195.8 897.4,196.6 898.7,201.3 C900.1,206.1 900.9,217.6 902.3,222.7 C903.7,227.9 905.7,232.8 907.1,232.2 C908.4,231.6 909.6,222.1 910.6,219.2 C911.6,216.2 912.0,214.0 913.0,214.4 C914.0,214.8 915.4,222.9 916.6,221.5 C917.8,220.1 919.1,209.8 920.1,206.1 C921.1,202.3 921.7,199.5 922.5,198.9 C923.3,198.4 923.9,201.9 924.9,202.5 C925.9,203.1 927.5,204.1 928.5,202.5 C929.4,200.9 930.2,196.0 930.8,193.0 C931.4,190.0 931.2,185.7 932.0,184.7 C932.8,183.7 934.6,188.8 935.6,187.1 C936.6,185.3 936.9,179.5 938.0,174.0 C939.1,168.4 941.3,154.0 942.2,153.8 C943.2,153.6 943.2,166.5 943.9,172.8 C944.6,179.1 945.3,187.7 946.3,191.8 C947.3,196.0 948.5,196.8 949.9,197.8 C951.2,198.8 953.2,196.6 954.6,197.8 C956.0,198.9 957.2,199.9 958.2,204.9 C959.2,209.8 959.6,224.9 960.6,227.5 C961.5,230.1 962.9,219.6 964.1,220.3 C965.3,221.1 966.7,235.2 967.7,232.2 C968.7,229.3 969.3,207.7 970.1,202.5 C970.9,197.4 971.5,199.1 972.4,201.3 C973.4,203.5 974.6,207.7 976.0,215.6 C977.4,223.5 979.4,245.1 980.8,248.9 C982.2,252.6 983.1,239.6 984.3,238.2 C985.5,236.8 986.9,241.5 987.9,240.6 C988.9,239.6 989.3,228.7 990.3,232.2 C991.3,235.8 992.7,257.4 993.8,262.0 C995.0,266.5 996.4,258.8 997.4,259.6 C998.5,260.3 999.1,267.5 1000.1,266.3 C1001.2,265.2 1002.6,256.9 1003.6,252.9 C1004.5,248.9 1005.0,244.6 1005.9,242.2 C1006.9,239.8 1008.0,238.2 1009.0,238.6 C1010.0,239.0 1010.6,243.2 1011.9,244.6 C1013.2,246.0 1015.4,246.2 1016.6,247.0 C1017.9,247.7 1018.5,250.5 1019.5,249.3 C1020.5,248.1 1021.7,242.0 1022.6,239.8 C1023.5,237.6 1024.0,236.5 1025.0,236.3 C1026.0,236.1 1027.5,239.8 1028.5,238.6 C1029.5,237.4 1029.9,233.9 1030.9,229.1 C1031.9,224.4 1033.3,213.9 1034.5,210.1 C1035.7,206.3 1036.7,206.5 1038.0,206.5 C1039.4,206.5 1041.4,209.3 1042.8,210.1 C1044.2,210.9 1045.2,212.5 1046.4,211.3 C1047.6,210.1 1048.7,204.2 1049.9,203.0 C1051.1,201.8 1052.1,204.8 1053.5,204.2 C1054.9,203.6 1057.1,198.4 1058.3,199.4 C1059.4,200.4 1059.2,208.1 1060.6,210.1 C1062.0,212.1 1064.8,207.9 1066.6,211.3 C1068.4,214.7 1069.9,226.3 1071.3,230.3 C1072.7,234.3 1073.9,235.5 1074.9,235.1 C1075.9,234.7 1076.5,224.6 1077.3,227.9 C1078.1,231.3 1078.9,251.1 1079.6,255.3 C1080.4,259.4 1080.8,253.3 1082.0,252.9 C1083.2,252.5 1085.4,254.9 1086.8,252.9 C1088.2,250.9 1089.4,246.4 1090.3,241.0 C1091.3,235.7 1091.7,224.2 1092.7,220.8 C1093.7,217.4 1095.1,226.5 1096.3,220.8 C1097.5,215.1 1098.7,195.6 1099.9,186.3 C1101.0,177.0 1102.0,169.3 1103.4,164.9 C1104.8,160.6 1106.8,162.4 1108.2,160.2 C1109.6,158.0 1110.6,154.2 1111.7,151.9 C1112.9,149.5 1114.1,143.1 1115.3,145.9 C1116.5,148.7 1117.7,166.9 1118.9,168.5 C1120.1,170.1 1121.3,156.2 1122.4,155.4 C1123.6,154.6 1125.0,154.2 1126.0,163.7 C1127.0,173.3 1127.6,199.0 1128.4,212.5 C1129.2,226.0 1130.2,239.2 1130.8,244.6 C1131.3,250.0 1131.0,250.0 1131.7,244.9 C1132.5,239.7 1134.1,219.2 1135.2,213.8 C1136.2,208.4 1137.1,212.2 1137.9,212.7 C1138.8,213.2 1139.6,213.9 1140.4,216.6 C1141.2,219.3 1141.7,222.5 1142.8,229.0 C1143.9,235.4 1145.5,247.4 1146.9,255.2 C1148.3,263.0 1149.6,274.8 1151.1,275.9 C1152.6,277.1 1154.3,267.0 1155.9,262.1 C1157.5,257.3 1159.3,247.2 1160.7,246.9 C1162.1,246.7 1163.0,257.3 1164.2,260.7 C1165.3,264.2 1166.7,269.0 1167.6,267.6 C1168.5,266.3 1168.2,257.1 1169.7,252.5 C1171.2,247.9 1175.0,245.8 1176.6,240.0 C1178.2,234.3 1178.6,221.4 1179.4,217.9 C1180.2,214.5 1180.5,217.7 1181.4,219.3 C1182.4,220.9 1183.5,221.9 1184.9,227.6 C1186.3,233.4 1188.4,248.0 1189.7,253.8 C1191.0,259.7 1191.6,262.6 1192.5,262.8 C1193.4,263.0 1194.0,257.2 1195.2,255.2 C1196.5,253.3 1198.7,252.2 1200.1,251.1 C1201.4,249.9 1202.5,244.6 1203.5,248.3 C1204.5,251.9 1205.1,263.3 1205.9,273.2 C1206.7,283.1 1207.5,303.7 1208.3,307.7 C1209.0,311.7 1209.8,299.2 1210.6,297.0 C1211.4,294.8 1212.2,292.2 1213.0,294.6 C1213.8,297.0 1214.6,310.1 1215.4,311.3 C1216.2,312.4 1217.0,303.7 1217.8,301.7 C1218.6,299.8 1219.3,300.2 1220.1,299.4 C1220.9,298.6 1221.6,299.8 1222.5,297.0 C1223.4,294.2 1224.6,285.5 1225.6,282.7 C1226.6,280.0 1227.6,278.0 1228.5,280.3 C1229.3,282.7 1230.0,293.0 1230.8,297.0 C1231.6,301.0 1232.6,301.9 1233.2,304.1 C1233.8,306.3 1233.3,304.1 1234.4,310.1 C1235.5,316.0 1237.4,326.7 1240.0,340.0 C1242.6,353.3 1247.3,377.5 1250.0,390.0 C1252.7,402.5 1254.1,408.8 1256.0,415.0 C1257.9,421.2 1259.8,424.6 1261.3,427.3 C1262.8,429.9 1263.7,431.0 1265.0,431.0 C1266.2,431.0 1267.8,428.3 1268.6,427.3 C1269.5,426.3 1268.0,429.4 1269.9,424.8 C1271.8,420.3 1275.0,403.3 1280.0,400.0 C1285.0,396.7 1293.3,405.0 1300.0,405.0 C1306.7,405.0 1313.3,398.3 1320.0,400.0 C1326.7,401.7 1335.1,410.5 1340.0,415.0 C1344.9,419.5 1346.3,428.1 1349.6,427.3 C1353.0,426.4 1354.9,417.9 1360.0,410.0 C1365.1,402.1 1373.3,386.7 1380.0,380.0 C1386.7,373.3 1393.3,373.3 1400.0,370.0 C1406.7,366.7 1414.1,363.1 1420.0,360.0 C1425.9,356.9 1432.1,352.2 1435.5,351.2 C1439.0,350.1 1439.2,352.4 1440.5,353.6 C1441.7,354.9 1441.9,356.7 1442.9,358.5 C1443.9,360.4 1445.6,361.8 1446.6,364.7 C1447.6,367.5 1448.2,371.8 1449.1,375.7 C1449.9,379.6 1450.9,383.5 1451.5,388.0 C1452.1,392.5 1452.1,399.9 1452.7,402.7 C1453.3,405.6 1454.4,405.6 1455.2,405.2 C1456.0,404.8 1456.8,401.5 1457.6,400.3 C1458.4,399.0 1459.6,398.2 1460.0,397.8" fill="none" stroke="#e9c25e" stroke-width="1.4" stroke-linejoin="round"/>
<path d="M103.0,275.0 C103.0,275.0 102.9,273.6 103.2,275.0 C103.6,276.4 104.5,281.4 105.1,283.3 C105.6,285.2 105.9,287.1 106.4,286.5 C107.0,285.9 107.7,280.8 108.3,279.6 C108.9,278.4 109.4,278.9 110.1,279.1 C110.8,279.4 111.7,281.1 112.4,281.0 C113.2,280.8 114.1,279.1 114.7,278.2 C115.4,277.3 115.9,275.2 116.4,275.5 C116.9,275.7 117.5,278.0 118.0,279.6 C118.4,281.2 118.8,284.5 119.3,285.1 C119.9,285.7 120.4,283.7 121.2,283.3 C121.9,282.8 123.1,282.1 123.9,282.4 C124.8,282.7 125.5,283.7 126.2,285.1 C127.0,286.5 127.9,291.4 128.5,290.6 C129.2,289.9 129.8,282.6 130.4,280.5 C131.0,278.4 131.6,278.4 132.2,278.2 C132.8,278.1 133.5,279.1 134.1,279.6 C134.6,280.1 134.9,281.6 135.5,281.4 C136.0,281.3 136.6,279.4 137.3,278.7 C138.0,278.0 138.8,277.4 139.6,277.3 C140.4,277.1 141.4,278.1 142.4,277.8 C143.3,277.4 144.4,275.1 145.1,275.0 C145.9,274.8 146.2,275.1 147.0,276.8 C147.7,278.5 149.0,283.3 149.7,285.1 C150.5,287.0 151.0,289.0 151.6,287.9 C152.2,286.8 152.8,281.1 153.4,278.7 C154.0,276.3 154.5,274.8 155.2,273.6 C156.0,272.4 156.6,271.9 158.0,271.3 C159.4,270.7 162.3,270.7 163.5,269.9 C164.8,269.2 164.7,269.1 165.4,266.7 C166.1,264.3 166.3,258.9 167.7,255.7 C169.1,252.4 172.2,248.1 173.7,247.4 C175.1,246.6 175.4,248.7 176.4,251.0 C177.5,253.4 178.9,257.5 180.0,261.2 C181.1,264.9 181.8,269.8 182.8,273.1 C183.7,276.5 184.6,279.8 185.5,281.4 C186.4,283.0 187.5,282.7 188.3,282.8 C189.1,283.0 189.5,283.0 190.1,282.4 C190.7,281.7 191.2,279.6 192.0,278.7 C192.7,277.8 193.7,277.0 194.7,276.8 C195.7,276.7 197.0,277.5 198.0,277.8 C198.9,278.0 199.5,278.3 200.3,278.2 C201.0,278.1 201.9,277.2 202.6,277.3 C203.3,277.4 203.7,277.2 204.4,278.7 C205.1,280.1 206.0,284.5 206.7,286.0 C207.4,287.6 207.7,287.3 208.5,287.9 C209.4,288.5 210.8,289.6 211.8,289.7 C212.7,289.8 213.4,288.8 214.1,288.3 C214.8,287.9 215.4,286.7 215.9,287.0 C216.4,287.2 216.8,288.0 217.3,289.7 C217.8,291.4 218.1,296.3 218.7,297.1 C219.3,297.9 220.2,295.2 221.0,294.3 C221.7,293.4 222.6,292.3 223.3,291.6 C224.0,290.9 224.4,290.2 225.1,290.2 C225.9,290.2 227.0,290.6 227.9,291.6 C228.7,292.6 229.5,295.0 230.2,296.2 C230.9,297.3 231.2,298.2 232.0,298.5 C232.9,298.8 234.5,299.2 235.2,298.0 C236.0,296.9 236.0,297.4 236.4,291.6 C236.7,285.7 237.0,269.0 237.3,263.0 C237.6,257.0 237.8,256.1 238.2,255.7 C238.6,255.2 239.1,258.0 239.9,260.3 C240.6,262.6 241.7,266.9 242.6,269.5 C243.5,272.1 244.5,273.3 245.4,275.9 C246.2,278.5 247.0,284.4 247.7,285.1 C248.4,285.9 249.0,281.5 249.5,280.5 C250.1,279.5 250.4,279.1 250.9,279.1 C251.4,279.1 251.8,279.6 252.3,280.5 C252.7,281.4 253.0,284.3 253.7,284.7 C254.4,285.0 255.4,283.1 256.4,282.8 C257.5,282.5 259.1,283.0 260.1,282.8 C261.1,282.6 261.6,282.9 262.4,281.4 C263.2,280.0 264.0,276.5 264.7,274.1 C265.4,271.6 265.9,268.1 266.6,266.7 C267.2,265.3 268.1,265.8 268.9,265.8 C269.6,265.8 270.6,267.9 271.2,266.7 C271.7,265.5 271.7,261.5 272.1,258.4 C272.5,255.3 273.0,250.1 273.5,248.3 C273.9,246.4 274.2,246.9 274.8,247.4 C275.5,247.8 276.7,249.5 277.6,251.0 C278.5,252.6 279.6,256.0 280.4,256.6 C281.1,257.2 281.4,256.6 282.2,254.7 C283.0,252.9 284.3,247.8 285.0,245.5 C285.7,243.3 285.9,241.4 286.4,241.4 C286.8,241.4 287.2,244.1 287.7,245.5 C288.3,246.9 288.7,248.9 289.6,249.7 C290.5,250.4 292.2,249.7 293.3,250.1 C294.3,250.5 295.1,250.7 296.0,252.0 C296.9,253.2 298.1,256.3 298.8,257.5 C299.5,258.7 299.7,258.9 300.1,259.3 C300.5,259.7 300.3,260.3 301.1,260.0 C301.9,259.7 303.8,258.2 304.7,257.6 C305.6,257.0 306.0,254.2 306.6,256.4 C307.2,258.6 307.4,269.7 308.3,270.7 C309.1,271.7 310.2,264.3 311.8,262.3 C313.4,260.4 316.2,258.6 317.8,258.8 C319.3,259.0 320.1,261.5 321.3,263.5 C322.5,265.5 323.7,269.3 324.9,270.7 C326.1,272.1 327.5,268.9 328.5,271.9 C329.4,274.8 329.6,285.6 330.8,288.5 C332.0,291.4 334.0,289.0 335.6,289.2 C337.2,289.4 338.8,289.3 340.3,289.7 C341.9,290.1 343.5,292.2 345.1,291.6 C346.7,291.0 348.3,288.2 349.9,286.1 C351.4,284.0 353.2,280.4 354.6,279.0 C356.0,277.6 357.2,277.6 358.2,277.8 C359.2,278.0 359.6,280.0 360.6,280.2 C361.5,280.4 362.7,278.6 364.1,279.0 C365.5,279.4 367.3,282.9 368.9,282.6 C370.5,282.2 372.4,278.0 373.6,276.6 C374.8,275.2 375.0,274.2 376.0,274.2 C377.0,274.2 378.5,278.2 379.6,276.6 C380.7,275.0 381.7,263.9 382.7,264.7 C383.7,265.5 384.6,277.4 385.5,281.4 C386.4,285.3 386.7,287.3 387.9,288.5 C389.1,289.7 391.1,288.5 392.7,288.5 C394.2,288.5 396.2,286.7 397.4,288.5 C398.6,290.3 399.2,295.5 400.0,299.5 C400.8,303.5 401.6,310.0 402.4,312.6 C403.2,315.1 403.8,313.1 404.8,314.9 C405.7,316.7 407.1,322.5 408.3,323.3 C409.5,324.0 410.8,323.1 411.9,319.7 C413.0,316.3 413.9,304.2 414.7,303.0 C415.5,301.9 415.9,307.8 416.6,312.6 C417.4,317.3 418.2,327.6 419.0,331.6 C419.8,335.5 420.6,336.7 421.4,336.3 C422.2,335.9 422.8,330.6 423.8,329.2 C424.8,327.8 426.2,327.2 427.3,328.0 C428.5,328.8 429.5,332.2 430.9,333.9 C432.3,335.7 434.1,336.7 435.7,338.7 C437.2,340.7 439.0,345.2 440.4,345.8 C441.8,346.4 442.8,343.3 444.0,342.3 C445.2,341.3 446.4,340.5 447.6,339.9 C448.7,339.3 450.1,340.3 451.1,338.7 C452.1,337.1 452.5,332.0 453.5,330.4 C454.5,328.8 456.1,328.4 457.1,329.2 C458.1,330.0 458.6,334.7 459.4,335.1 C460.2,335.5 461.0,332.4 461.8,331.6 C462.6,330.8 463.4,330.2 464.2,330.4 C465.0,330.6 465.8,334.5 466.6,332.8 C467.4,331.0 468.2,320.3 468.9,319.7 C469.7,319.1 470.5,328.8 471.3,329.2 C472.1,329.6 472.9,324.4 473.7,322.1 C474.5,319.7 475.3,315.5 476.1,314.9 C476.9,314.3 477.5,320.1 478.5,318.5 C479.4,316.9 480.8,309.4 482.0,305.4 C483.2,301.5 484.4,295.5 485.6,294.7 C486.8,293.9 488.2,298.5 489.2,300.7 C490.1,302.8 490.5,306.8 491.5,307.8 C492.5,308.8 493.9,308.2 495.1,306.6 C496.3,305.0 497.7,298.5 498.7,298.3 C499.7,298.1 500.1,303.0 501.0,305.4 C502.0,307.8 503.4,310.8 504.6,312.6 C505.8,314.3 507.2,317.3 508.2,316.1 C509.2,314.9 509.8,305.0 510.6,305.4 C511.3,305.8 511.9,316.7 512.9,318.5 C513.9,320.3 515.3,317.3 516.5,316.1 C517.7,314.9 518.9,311.4 520.1,311.4 C521.3,311.4 522.2,314.3 523.6,316.1 C525.0,317.9 527.0,320.9 528.4,322.1 C529.8,323.3 530.8,324.4 532.0,323.3 C533.1,322.1 534.6,318.3 535.5,314.9 C536.4,311.6 536.6,302.4 537.4,303.0 C538.2,303.6 539.4,316.9 540.3,318.5 C541.1,320.1 541.7,317.5 542.7,312.6 C543.6,307.6 545.0,290.6 546.2,288.8 C547.4,287.0 548.6,299.9 549.8,301.9 C551.0,303.8 552.4,299.0 553.5,300.6 C554.5,302.2 554.9,308.7 555.9,311.3 C557.0,313.8 558.5,317.2 559.5,316.0 C560.5,314.8 560.9,307.3 561.9,304.1 C562.9,301.0 564.3,298.0 565.5,297.0 C566.6,296.0 567.8,297.4 569.0,298.2 C570.2,299.0 571.6,301.7 572.6,301.7 C573.6,301.7 574.3,302.9 575.0,298.2 C575.6,293.4 576.0,280.7 576.6,273.2 C577.2,265.7 577.8,255.0 578.5,253.0 C579.2,251.0 580.1,259.9 580.9,261.3 C581.7,262.7 582.5,261.9 583.3,261.3 C584.1,260.7 584.8,259.3 585.7,257.8 C586.5,256.2 587.5,251.4 588.5,251.8 C589.5,252.2 590.7,257.4 591.6,260.1 C592.5,262.9 593.0,267.3 594.0,268.5 C595.0,269.6 596.6,266.7 597.6,267.3 C598.5,267.9 598.9,270.6 599.9,272.0 C600.9,273.4 602.3,278.0 603.5,275.6 C604.7,273.2 605.7,260.7 607.1,257.8 C608.4,254.8 610.6,256.2 611.8,257.8 C613.0,259.3 613.2,264.9 614.2,267.3 C615.2,269.6 616.6,272.2 617.8,272.0 C618.9,271.8 620.3,267.9 621.3,266.1 C622.3,264.3 622.7,262.1 623.7,261.3 C624.7,260.5 626.3,262.9 627.3,261.3 C628.3,259.7 628.9,252.6 629.6,251.8 C630.4,251.0 631.0,256.0 632.0,256.6 C633.0,257.2 634.4,256.0 635.6,255.4 C636.8,254.8 638.0,253.4 639.2,253.0 C640.3,252.6 641.5,253.2 642.7,253.0 C643.9,252.8 645.3,251.2 646.3,251.8 C647.3,252.4 647.9,256.2 648.7,256.6 C649.5,257.0 650.1,254.6 651.0,254.2 C652.0,253.8 653.4,253.8 654.6,254.2 C655.8,254.6 657.2,256.6 658.2,256.6 C659.2,256.6 660.0,257.4 660.6,254.2 C661.2,251.0 661.0,241.3 661.7,237.6 C662.5,233.8 664.1,234.6 665.3,231.6 C666.5,228.6 667.7,224.3 668.9,219.7 C670.1,215.2 671.4,208.2 672.4,204.3 C673.5,200.3 674.3,195.0 675.3,195.9 C676.3,196.9 677.3,206.6 678.4,210.2 C679.5,213.8 680.8,216.7 682.0,217.3 C683.1,217.9 684.5,215.6 685.5,213.8 C686.5,212.0 686.5,208.0 687.9,206.6 C689.3,205.3 692.3,204.7 693.8,205.5 C695.4,206.2 696.4,207.4 697.4,211.4 C698.4,215.4 698.8,226.1 699.8,229.2 C700.8,232.4 702.1,230.5 703.6,230.3 C705.0,230.2 706.9,228.2 708.3,228.4 C709.7,228.6 710.5,229.8 711.9,231.5 C713.3,233.2 715.1,238.1 716.6,238.7 C718.2,239.3 719.8,236.3 721.4,235.1 C723.0,233.9 724.8,232.2 726.2,231.5 C727.5,230.8 728.5,234.6 729.7,230.8 C730.9,227.1 732.1,211.4 733.3,208.9 C734.5,206.5 735.7,213.3 736.9,216.1 C738.0,218.9 739.2,222.2 740.4,225.6 C741.6,229.0 742.6,233.5 744.0,236.3 C745.4,239.1 747.4,241.6 748.7,242.2 C750.1,242.8 751.2,241.9 752.3,239.9 C753.4,237.8 754.2,230.1 755.2,229.9 C756.1,229.7 757.1,236.8 758.3,238.7 C759.4,240.5 760.6,240.3 761.8,241.0 C763.0,241.8 764.2,243.3 765.4,243.4 C766.6,243.5 767.8,240.8 768.9,241.8 C770.1,242.8 771.3,248.3 772.5,249.4 C773.7,250.4 774.9,249.2 776.1,248.2 C777.3,247.2 778.5,247.0 779.6,243.4 C780.8,239.9 782.2,229.8 783.2,226.8 C784.2,223.8 784.7,225.5 785.6,225.6 C786.5,225.7 787.5,225.7 788.4,227.5 C789.4,229.3 790.4,235.2 791.5,236.3 C792.6,237.4 794.1,235.2 795.1,233.9 C796.1,232.6 796.7,228.6 797.5,228.4 C798.3,228.2 798.7,230.1 799.9,232.7 C801.0,235.3 802.9,246.3 804.1,244.1 C805.3,242.0 806.0,225.3 807.0,219.6 C808.0,214.0 809.1,210.1 810.1,210.1 C811.1,210.1 811.9,216.9 812.9,219.6 C814.0,222.4 815.5,226.4 816.5,226.8 C817.5,227.2 817.7,222.6 818.9,222.0 C820.1,221.4 822.2,223.4 823.6,223.2 C825.0,223.0 826.2,223.2 827.2,220.8 C828.2,218.5 828.8,212.7 829.6,208.9 C830.4,205.2 831.0,202.8 832.0,198.3 C832.9,193.7 834.5,183.8 835.5,181.6 C836.6,179.4 837.2,186.6 838.4,185.2 C839.6,183.8 841.5,177.2 842.7,173.3 C843.8,169.3 844.5,162.2 845.5,161.4 C846.5,160.6 847.8,167.6 848.6,168.5 C849.3,169.4 849.6,167.2 850.0,166.9 C850.4,166.5 850.4,166.5 851.0,166.2 C851.6,165.8 852.5,164.2 853.6,164.5 C854.6,164.8 855.9,166.7 857.1,168.0 C858.3,169.4 859.5,171.8 860.7,172.8 C861.9,173.8 863.2,173.6 864.3,174.0 C865.3,174.4 866.0,176.6 867.1,175.2 C868.2,173.8 869.8,165.9 870.9,165.7 C872.0,165.5 872.9,171.8 873.8,174.0 C874.6,176.2 875.4,178.3 876.2,178.7 C876.9,179.1 877.7,178.9 878.5,176.4 C879.3,173.8 880.1,163.5 880.9,163.3 C881.7,163.1 882.5,173.4 883.3,175.2 C884.1,177.0 885.0,175.0 885.7,174.0 C886.4,173.0 886.8,169.2 887.6,169.2 C888.4,169.2 889.5,172.4 890.4,174.0 C891.3,175.6 891.8,178.1 892.8,178.7 C893.8,179.3 895.2,177.4 896.4,177.6 C897.6,177.7 898.7,178.7 899.9,179.9 C901.1,181.1 902.3,181.9 903.5,184.7 C904.7,187.5 905.7,194.2 907.1,196.6 C908.4,198.9 910.0,198.2 911.8,198.9 C913.6,199.7 916.0,202.7 917.8,201.3 C919.5,199.9 921.3,191.0 922.5,190.6 C923.7,190.2 923.7,197.8 924.9,198.9 C926.1,200.1 928.3,198.6 929.6,197.8 C931.0,197.0 931.8,195.0 933.2,194.2 C934.6,193.4 936.6,195.8 938.0,193.0 C939.4,190.2 940.3,179.1 941.5,177.6 C942.7,176.0 944.1,181.9 945.1,183.5 C946.1,185.1 946.5,186.9 947.5,187.1 C948.5,187.3 949.7,185.3 951.0,184.7 C952.4,184.1 954.2,182.3 955.8,183.5 C957.4,184.7 959.2,190.2 960.6,191.8 C961.9,193.4 962.7,193.8 964.1,193.0 C965.5,192.2 967.7,189.2 968.9,187.1 C970.1,184.9 970.3,181.3 971.3,179.9 C972.2,178.5 973.8,179.7 974.8,178.7 C975.9,177.7 976.7,172.8 977.7,174.0 C978.7,175.2 979.7,183.7 980.8,185.9 C981.9,188.1 983.1,185.9 984.3,187.1 C985.5,188.3 986.7,192.4 987.9,193.0 C989.1,193.6 990.1,190.6 991.5,190.6 C992.9,190.6 994.8,191.9 996.2,193.0 C997.6,194.1 999.2,196.2 1000.0,197.0 C1000.8,197.8 1000.4,198.2 1001.0,197.8 C1001.6,197.4 1002.6,196.4 1003.6,194.6 C1004.5,192.9 1005.7,187.9 1006.7,187.5 C1007.6,187.1 1008.6,190.5 1009.5,192.3 C1010.4,194.1 1010.9,197.4 1011.9,198.2 C1012.9,199.0 1014.3,196.8 1015.5,197.0 C1016.6,197.2 1017.8,199.0 1019.0,199.4 C1020.2,199.8 1021.4,201.2 1022.6,199.4 C1023.8,197.6 1025.0,191.7 1026.2,188.7 C1027.3,185.7 1028.5,184.3 1029.7,181.6 C1030.9,178.8 1032.1,174.0 1033.3,172.1 C1034.5,170.1 1035.9,169.7 1036.9,169.7 C1037.8,169.7 1038.2,170.1 1039.2,172.1 C1040.2,174.0 1041.6,179.8 1042.8,181.6 C1044.0,183.4 1045.2,183.4 1046.4,182.8 C1047.6,182.2 1048.9,179.4 1049.9,178.0 C1050.9,176.6 1051.5,174.2 1052.3,174.4 C1053.1,174.6 1053.8,179.8 1054.7,179.2 C1055.6,178.6 1056.5,171.7 1057.5,170.9 C1058.5,170.1 1059.5,172.9 1060.6,174.4 C1061.7,176.0 1062.8,178.4 1064.2,180.4 C1065.6,182.4 1067.4,184.9 1068.9,186.3 C1070.5,187.7 1072.3,187.9 1073.7,188.7 C1075.1,189.5 1076.3,188.7 1077.3,191.1 C1078.3,193.5 1078.9,200.8 1079.6,203.0 C1080.4,205.1 1081.2,204.0 1082.0,204.2 C1082.8,204.4 1083.6,203.8 1084.4,204.2 C1085.2,204.6 1086.0,207.5 1086.8,206.5 C1087.6,205.5 1088.2,202.0 1089.2,198.2 C1090.1,194.4 1091.5,184.9 1092.7,183.9 C1093.9,183.0 1095.3,193.9 1096.3,192.3 C1097.3,190.7 1097.9,179.8 1098.7,174.4 C1099.5,169.1 1100.1,163.1 1101.0,160.2 C1102.0,157.2 1103.2,157.0 1104.6,156.6 C1106.0,156.2 1108.0,160.0 1109.4,157.8 C1110.8,155.6 1111.9,147.5 1112.9,143.5 C1113.9,139.6 1114.5,133.6 1115.3,134.0 C1116.1,134.4 1116.9,143.1 1117.7,145.9 C1118.5,148.7 1118.9,149.9 1120.1,150.7 C1121.3,151.5 1123.6,142.7 1124.8,150.7 C1126.0,158.6 1126.2,182.8 1127.2,198.2 C1128.2,213.7 1129.8,239.0 1130.8,243.4 C1131.8,247.7 1132.2,228.7 1133.1,224.4 C1134.1,220.0 1135.5,217.6 1136.7,217.2 C1137.9,216.8 1139.1,219.8 1140.3,222.0 C1141.5,224.2 1142.7,229.7 1143.8,230.3 C1145.0,230.9 1146.2,223.4 1147.4,225.6 C1148.6,227.7 1150.1,240.6 1151.0,243.4 C1151.8,246.2 1151.7,242.1 1152.4,242.3 C1153.0,242.5 1153.8,245.7 1154.8,244.7 C1155.7,243.7 1157.3,238.5 1158.3,236.4 C1159.3,234.2 1159.9,231.0 1160.7,231.6 C1161.5,232.2 1162.1,237.2 1163.1,239.9 C1164.1,242.7 1165.5,247.9 1166.6,248.3 C1167.8,248.6 1169.0,244.3 1170.2,242.3 C1171.4,240.3 1172.8,237.9 1173.8,236.4 C1174.8,234.8 1175.4,235.0 1176.2,232.8 C1176.9,230.6 1177.9,225.7 1178.5,223.3 C1179.1,220.9 1178.9,219.1 1179.7,218.5 C1180.5,217.9 1182.3,218.9 1183.3,219.7 C1184.3,220.5 1184.5,222.7 1185.7,223.3 C1186.9,223.9 1189.0,222.3 1190.4,223.3 C1191.8,224.3 1192.8,227.1 1194.0,229.2 C1195.2,231.4 1196.2,234.8 1197.6,236.4 C1198.9,237.9 1200.9,237.6 1202.3,238.7 C1203.7,239.9 1204.9,242.1 1205.9,243.5 C1206.9,244.9 1207.5,247.3 1208.3,247.1 C1209.0,246.9 1209.6,242.9 1210.6,242.3 C1211.6,241.7 1213.0,243.7 1214.2,243.5 C1215.4,243.3 1217.0,242.3 1217.8,241.1 C1218.6,239.9 1218.4,236.0 1218.9,236.4 C1219.5,236.8 1220.5,241.9 1221.3,243.5 C1222.1,245.1 1222.9,245.5 1223.7,245.9 C1224.5,246.3 1225.3,246.1 1226.1,245.9 C1226.9,245.7 1227.5,244.3 1228.5,244.7 C1229.4,245.1 1230.8,247.3 1232.0,248.3 C1233.2,249.2 1234.6,250.8 1235.6,250.6 C1236.6,250.4 1237.2,246.7 1238.0,247.1 C1238.8,247.5 1239.4,251.8 1240.3,253.0 C1241.3,254.2 1242.7,253.8 1243.9,254.2 C1245.1,254.6 1246.3,255.4 1247.5,255.4 C1248.7,255.4 1249.9,254.2 1251.0,254.2 C1252.2,254.2 1253.6,255.6 1254.6,255.4 C1255.6,255.2 1256.2,252.8 1257.0,253.0 C1257.8,253.2 1258.6,253.2 1259.4,256.6 C1260.2,259.9 1261.0,268.1 1261.7,273.2 C1262.5,278.4 1263.3,284.5 1264.1,287.5 C1264.9,290.5 1265.5,291.6 1266.5,291.0 C1267.5,290.5 1268.9,285.5 1270.1,283.9 C1271.3,282.3 1272.4,280.9 1273.6,281.5 C1274.8,282.1 1276.2,287.7 1277.2,287.5 C1278.2,287.3 1278.6,280.7 1279.6,280.3 C1280.6,280.0 1282.0,284.1 1283.1,285.1 C1284.3,286.1 1285.5,285.7 1286.7,286.3 C1287.9,286.9 1289.3,288.5 1290.3,288.7 C1291.3,288.9 1291.7,286.9 1292.7,287.5 C1293.6,288.1 1295.0,292.6 1296.2,292.2 C1297.4,291.9 1298.9,286.8 1299.9,285.4 C1300.9,283.9 1301.5,283.6 1302.3,283.7 C1303.1,283.7 1303.8,284.5 1304.6,286.0 C1305.4,287.4 1306.1,290.0 1306.9,292.1 C1307.7,294.1 1308.4,296.9 1309.2,298.2 C1310.0,299.5 1310.6,300.1 1311.5,299.8 C1312.4,299.4 1313.4,297.1 1314.6,295.9 C1315.7,294.8 1317.1,293.9 1318.4,292.9 C1319.7,291.8 1321.1,290.6 1322.2,289.8 C1323.4,289.0 1324.4,289.1 1325.3,288.3 C1326.2,287.4 1326.8,284.5 1327.6,284.4 C1328.4,284.3 1329.3,286.7 1329.9,287.5 C1330.5,288.3 1330.8,289.7 1331.4,289.0 C1332.1,288.4 1333.0,285.3 1333.7,283.7 C1334.5,282.0 1335.3,280.1 1336.0,279.0 C1336.8,278.0 1337.6,277.5 1338.3,277.5 C1339.1,277.5 1339.9,277.9 1340.6,279.0 C1341.4,280.2 1342.2,282.2 1342.9,284.4 C1343.7,286.6 1344.4,290.2 1345.2,292.1 C1346.1,294.0 1347.4,295.3 1348.3,295.9 C1349.2,296.6 1349.8,297.2 1350.6,295.9 C1351.4,294.6 1352.3,289.7 1352.9,288.3 C1353.6,286.8 1353.8,287.2 1354.4,287.5 C1355.1,287.7 1356.0,289.7 1356.7,289.8 C1357.5,289.9 1358.3,288.6 1359.0,288.3 C1359.8,287.9 1360.5,287.1 1361.3,287.5 C1362.2,287.9 1363.4,289.1 1364.4,290.6 C1365.4,292.0 1366.5,294.5 1367.5,295.9 C1368.5,297.3 1369.3,298.5 1370.6,299.0 C1371.8,299.5 1373.6,299.6 1375.2,299.0 C1376.7,298.3 1378.3,296.0 1379.8,295.2 C1381.2,294.3 1382.6,293.0 1383.6,293.6 C1384.6,294.3 1385.0,296.7 1385.9,299.0 C1386.8,301.3 1387.9,306.8 1389.0,307.4 C1390.0,308.1 1391.0,304.4 1392.0,302.8 C1393.0,301.3 1394.1,299.1 1395.1,298.2 C1396.1,297.3 1397.3,298.2 1398.2,297.5 C1399.1,296.7 1399.8,295.4 1400.5,293.6 C1401.1,291.8 1401.5,289.4 1402.0,286.7 C1402.5,284.0 1403.0,279.6 1403.5,277.5 C1404.0,275.5 1404.4,274.3 1405.1,274.4 C1405.7,274.6 1406.7,277.3 1407.4,278.3 C1408.1,279.3 1408.7,281.1 1409.2,280.6 C1409.7,280.1 1409.7,276.4 1410.4,275.2 C1411.1,274.1 1412.6,273.8 1413.5,273.7 C1414.4,273.6 1415.2,273.4 1415.8,274.4 C1416.4,275.5 1416.6,279.2 1417.3,279.8 C1418.1,280.5 1419.5,278.8 1420.4,278.3 C1421.3,277.8 1421.9,277.3 1422.7,276.7 C1423.5,276.2 1424.4,274.8 1425.0,275.2 C1425.6,275.6 1426.0,277.8 1426.5,279.0 C1427.0,280.3 1427.4,284.0 1428.1,282.9 C1428.7,281.7 1429.7,275.7 1430.4,272.1 C1431.0,268.6 1431.4,264.0 1431.9,261.4 C1432.4,258.9 1432.8,257.2 1433.4,256.8 C1434.1,256.4 1435.1,257.7 1435.7,259.1 C1436.4,260.5 1436.5,263.3 1437.3,265.2 C1438.0,267.2 1439.3,269.0 1440.3,270.6 C1441.4,272.3 1442.5,273.8 1443.4,275.2 C1444.3,276.6 1444.9,278.4 1445.7,279.0 C1446.5,279.7 1447.2,279.3 1448.0,279.0 C1448.8,278.8 1449.5,277.3 1450.3,277.5 C1451.1,277.8 1451.8,279.7 1452.6,280.6 C1453.4,281.5 1453.8,282.1 1454.9,282.9 C1456.1,283.7 1458.7,284.8 1459.5,285.2 C1460.4,285.6 1459.9,285.2 1460.0,285.2" fill="none" stroke="#22c98b" stroke-width="1.6" stroke-linejoin="round"/>
<g transform="translate(1340,495) scale(0.08464)" fill="#a6a6a6"><path d="M200,150 L205,128 Q212,118 222,128 L234,148 L316,148 L328,128 Q340,118 348,128 L354,150 Q382,160 410,185 Q432,205 420,222 Q400,230 378,222 Q384,270 352,305 Q382,332 378,372 Q372,402 346,412 L340,450 Q320,462 298,450 L290,422 L270,422 L262,452 Q240,464 218,452 L210,412 Q180,400 178,370 Q178,330 202,305 Q168,270 174,222 Q150,230 130,222 Q118,205 140,185 Q168,160 200,150 Z"/><path d="M175,448 L215,420 L220,428 L182,452 Z"/></g>
<text x="1381" y="525.5" font-family='"Liberation Sans", sans-serif' font-size="20" font-weight="bold" fill="#a6a6a6" letter-spacing="-1.45">coinglass</text>
<line x1="101.5" y1="288.5" x2="1460" y2="288.5" stroke="#e6e6e6" stroke-width="1.2" stroke-dasharray="4.2,2.6"/>
<line x1="1460" y1="107" x2="1460" y2="547" stroke="#9a9a9a" stroke-width="1.2" stroke-dasharray="4,2.6"/>
<circle cx="1460" cy="285.2" r="4.6" fill="#ffffff" stroke="#22c98b" stroke-width="2"/>
<circle cx="1460" cy="397.8" r="4.6" fill="#ffffff" stroke="#e9c25e" stroke-width="2"/>
<text x="93.5" y="112.0" text-anchor="end" font-family='"Liberation Sans", sans-serif' font-size="12" letter-spacing="0.5" fill="#bdbdbd">$100.00B</text>
<text x="93.5" y="199.8" text-anchor="end" font-family='"Liberation Sans", sans-serif' font-size="12" letter-spacing="0.5" fill="#bdbdbd">$80.00B</text>
<text x="93.5" y="375.9" text-anchor="end" font-family='"Liberation Sans", sans-serif' font-size="12" letter-spacing="0.5" fill="#bdbdbd">$40.00B</text>
<text x="93.5" y="463.6" text-anchor="end" font-family='"Liberation Sans", sans-serif' font-size="12" letter-spacing="0.5" fill="#bdbdbd">$20.00B</text>
<text x="93.5" y="550.4" text-anchor="end" font-family='"Liberation Sans", sans-serif' font-size="12" letter-spacing="0.5" fill="#bdbdbd">$0</text>
<text x="1470" y="111.9" font-family='"Liberation Sans", sans-serif' font-size="12" letter-spacing="0.5" fill="#bdbdbd">$130.00K</text>
<text x="1470" y="183.4" font-family='"Liberation Sans", sans-serif' font-size="12" letter-spacing="0.5" fill="#bdbdbd">$120.00K</text>
<text x="1470" y="254.8" font-family='"Liberation Sans", sans-serif' font-size="12" letter-spacing="0.5" fill="#bdbdbd">$110.00K</text>
<text x="1470" y="326.3" font-family='"Liberation Sans", sans-serif' font-size="12" letter-spacing="0.5" fill="#bdbdbd">$100.00K</text>
<text x="1470" y="397.7" font-family='"Liberation Sans", sans-serif' font-size="12" letter-spacing="0.5" fill="#bdbdbd">$90.00K</text>
<text x="1470" y="469.2" font-family='"Liberation Sans", sans-serif' font-size="12" letter-spacing="0.5" fill="#bdbdbd">$80.00K</text>
<text x="1470" y="540.6" font-family='"Liberation Sans", sans-serif' font-size="12" letter-spacing="0.5" fill="#bdbdbd">$70.00K</text>
<text x="128.9" y="566.2" text-anchor="middle" font-family='"Liberation Sans", sans-serif' font-size="12" letter-spacing="0.3" fill="#c0c0c0">4 Dec</text>
<text x="183.5" y="566.2" text-anchor="middle" font-family='"Liberation Sans", sans-serif' font-size="12" letter-spacing="0.3" fill="#c0c0c0">21 Dec</text>
<text x="238.0" y="566.2" text-anchor="middle" font-family='"Liberation Sans", sans-serif' font-size="12" letter-spacing="0.3" fill="#c0c0c0">7 Jan</text>
<text x="292.6" y="566.2" text-anchor="middle" font-family='"Liberation Sans", sans-serif' font-size="12" letter-spacing="0.3" fill="#c0c0c0">24 Jan</text>
<text x="347.2" y="566.2" text-anchor="middle" font-family='"Liberation Sans", sans-serif' font-size="12" letter-spacing="0.3" fill="#c0c0c0">10 Feb</text>
<text x="401.8" y="566.2" text-anchor="middle" font-family='"Liberation Sans", sans-serif' font-size="12" letter-spacing="0.3" fill="#c0c0c0">27 Feb</text>
<text x="456.3" y="566.2" text-anchor="middle" font-family='"Liberation Sans", sans-serif' font-size="12" letter-spacing="0.3" fill="#c0c0c0">16 Mar</text>
<text x="510.9" y="566.2" text-anchor="middle" font-family='"Liberation Sans", sans-serif' font-size="12" letter-spacing="0.3" fill="#c0c0c0">2 Apr</text>
<text x="565.5" y="566.2" text-anchor="middle" font-family='"Liberation Sans", sans-serif' font-size="12" letter-spacing="0.3" fill="#c0c0c0">19 Apr</text>
<text x="620.0" y="566.2" text-anchor="middle" font-family='"Liberation Sans", sans-serif' font-size="12" letter-spacing="0.3" fill="#c0c0c0">6 May</text>
<text x="674.6" y="566.2" text-anchor="middle" font-family='"Liberation Sans", sans-serif' font-size="12" letter-spacing="0.3" fill="#c0c0c0">23 May</text>
<text x="729.2" y="566.2" text-anchor="middle" font-family='"Liberation Sans", sans-serif' font-size="12" letter-spacing="0.3" fill="#c0c0c0">9 Jun</text>
<text x="783.7" y="566.2" text-anchor="middle" font-family='"Liberation Sans", sans-serif' font-size="12" letter-spacing="0.3" fill="#c0c0c0">26 Jun</text>
<text x="838.3" y="566.2" text-anchor="middle" font-family='"Liberation Sans", sans-serif' font-size="12" letter-spacing="0.3" fill="#c0c0c0">13 Jul</text>
<text x="892.9" y="566.2" text-anchor="middle" font-family='"Liberation Sans", sans-serif' font-size="12" letter-spacing="0.3" fill="#c0c0c0">30 Jul</text>
<text x="947.4" y="566.2" text-anchor="middle" font-family='"Liberation Sans", sans-serif' font-size="12" letter-spacing="0.3" fill="#c0c0c0">16 Aug</text>
<text x="1002.0" y="566.2" text-anchor="middle" font-family='"Liberation Sans", sans-serif' font-size="12" letter-spacing="0.3" fill="#c0c0c0">2 Sep</text>
<text x="1056.6" y="566.2" text-anchor="middle" font-family='"Liberation Sans", sans-serif' font-size="12" letter-spacing="0.3" fill="#c0c0c0">19 Sep</text>
<text x="1111.2" y="566.2" text-anchor="middle" font-family='"Liberation Sans", sans-serif' font-size="12" letter-spacing="0.3" fill="#c0c0c0">6 Oct</text>
<text x="1165.7" y="566.2" text-anchor="middle" font-family='"Liberation Sans", sans-serif' font-size="12" letter-spacing="0.3" fill="#c0c0c0">23 Oct</text>
<text x="1220.3" y="566.2" text-anchor="middle" font-family='"Liberation Sans", sans-serif' font-size="12" letter-spacing="0.3" fill="#c0c0c0">9 Nov</text>
<text x="1274.9" y="566.2" text-anchor="middle" font-family='"Liberation Sans", sans-serif' font-size="12" letter-spacing="0.3" fill="#c0c0c0">26 Nov</text>
<text x="1329.4" y="566.2" text-anchor="middle" font-family='"Liberation Sans", sans-serif' font-size="12" letter-spacing="0.3" fill="#c0c0c0">13 Dec</text>
<text x="1384.0" y="566.2" text-anchor="middle" font-family='"Liberation Sans", sans-serif' font-size="12" letter-spacing="0.3" fill="#c0c0c0">31 Dec</text>
<path d="M104.4,621.6 L111.1,622.1 L113.3,623.2 L117.7,622.8 L133.2,622.3 L148.7,621.7 L166.4,621.7 L188.5,621.7 L201.8,620.8 L224.0,620.8 L232.8,621.2 L252.7,620.8 L266.0,619.4 L277.1,618.3 L285.9,618.1 L290.4,616.8 L297.0,615.9 L301.4,613.9 L304.8,611.0 L307.0,612.6 L309.2,611.5 L314.7,613.7 L321.4,612.1 L324.7,608.8 L328.0,608.4 L332.0,605.5 L335.1,608.8 L339.1,607.3 L344.6,604.4 L347.9,605.5 L352.3,607.0 L356.8,604.6 L361.2,604.8 L365.6,603.3 L371.2,607.5 L375.6,605.5 L377.8,606.6 L380.7,604.6 L387.8,612.1 L391.1,611.5 L394.4,612.6 L396.6,611.7 L399.9,613.2 L403.3,611.0 L407.7,613.2 L414.3,612.6 L425.4,614.3 L432.0,610.4 L435.4,611.5 L438.7,608.8 L440.0,609.5 L444.4,608.2 L451.1,607.7 L454.4,606.6 L457.7,608.8 L462.1,608.8 L465.5,609.9 L468.8,610.6 L472.1,607.7 L478.7,604.4 L484.3,603.3 L488.7,603.7 L494.2,602.2 L499.8,604.8 L504.2,605.1 L508.6,605.5 L510.8,607.7 L517.5,609.0 L523.0,607.3 L526.3,608.8 L533.0,610.6 L537.4,610.4 L540.7,612.1 L546.3,611.7 L550.7,609.9 L555.1,610.4 L558.4,611.7 L564.0,609.9 L566.2,611.5 L572.8,611.0 L577.2,609.9 L582.8,608.8 L588.3,609.9 L592.7,611.3 L599.4,611.0 L604.9,611.7 L609.3,614.3 L614.9,613.9 L621.5,614.3 L627.0,613.9 L632.6,617.7 L639.2,618.1 L650.3,617.7 L659.1,616.6 L670.2,617.0 L679.1,617.7 L687.9,617.2 L696.8,618.1 L705.6,618.1 L723.3,617.7 L725.5,618.8 L738.8,618.8 L749.9,618.8 L763.2,618.8 L767.6,617.0 L772.0,616.6 L780.0,616.6 L788.9,616.4 L799.9,617.5 L806.6,615.5 L819.8,614.8 L828.7,615.3 L837.6,614.8 L859.7,616.0 L866.3,614.4 L899.5,614.8 L904.0,616.0 L912.8,616.0 L934.9,615.3 L943.8,613.7 L948.2,612.6 L957.1,612.0 L965.9,611.5 L971.5,609.8 L979.2,610.4 L985.9,609.8 L993.6,608.9 L996.9,610.4 L1002.5,610.9 L1010.2,609.8 L1016.9,607.5 L1022.4,607.1 L1025.7,603.8 L1030.1,601.1 L1034.6,600.5 L1037.9,602.7 L1043.4,600.5 L1047.8,601.6 L1052.3,600.9 L1055.6,603.3 L1061.1,602.2 L1065.5,604.2 L1070.0,603.1 L1076.6,601.1 L1085.5,601.6 L1088.8,600.5 L1096.5,602.7 L1103.2,603.8 L1107.6,605.3 L1113.1,602.7 L1120.0,600.8 L1126.8,605.3 L1132.5,604.2 L1138.2,603.0 L1141.6,604.2 L1147.3,606.0 L1154.2,604.2 L1161.0,602.6 L1167.9,603.7 L1174.7,601.4 L1180.4,600.3 L1183.8,599.6 L1187.2,595.5 L1190.0,593.3 L1191.8,592.9 L1194.6,590.6 L1196.8,592.9 L1198.7,591.5 L1201.9,591.5 L1204.6,590.1 L1206.9,589.7 L1210.5,587.9 L1212.3,591.5 L1216.0,591.0 L1219.2,592.9 L1223.3,589.7 L1226.5,592.4 L1231.0,588.8 L1234.7,588.6 L1237.9,588.8 L1239.7,590.1 L1242.9,592.0 L1246.5,592.0 L1253.8,591.7 L1256.5,595.1 L1260.6,593.3 L1262.9,596.5 L1267.5,595.1 L1273.0,594.7 L1275.7,596.1 L1279.3,596.5 L1281.6,598.3 L1284.8,595.6 L1287.5,596.1 L1291.2,592.4 L1297.6,592.0 L1301.7,588.3 L1304.9,589.2 L1309.4,586.2 L1314.0,588.3 L1315.8,587.9 L1318.5,589.7 L1321.3,586.9 L1324.9,588.3 L1330.0,588.8 L1331.9,587.8 L1332.7,587.9 L1335.0,588.3 L1336.8,587.1 L1339.1,587.4 L1341.9,584.2 L1344.6,584.0 L1348.2,584.7 L1351.9,583.7 L1355.5,586.2 L1361.0,583.3 L1364.6,584.7 L1367.4,584.9 L1370.1,586.5 L1373.8,587.4 L1376.5,586.8 L1379.7,586.5 L1382.0,584.7 L1386.5,584.9 L1389.7,587.4 L1395.2,582.2 L1397.9,582.8 L1399.7,586.0 L1401.1,585.6 L1403.8,587.9 L1407.5,586.5 L1409.3,585.1 L1412.0,586.9 L1415.2,589.7 L1418.4,588.3 L1421.2,592.0 L1425.7,595.6 L1428.5,593.8 L1433.9,593.8 L1437.1,593.3 L1439.4,594.7 L1442.6,595.3 L1445.8,594.7 L1448.5,595.1 L1451.2,593.8 L1454.0,592.4 L1456.7,593.8 L1459.4,591.0 L1461.3,592.2 L1463.5,594.7 L1464,635.5 L104,635.5 Z" fill="#0a1022"/>
<rect x="1197" y="570" width="267" height="65.5" fill="#070d1c"/>
<path d="M104.4,621.6 L111.1,622.1 L113.3,623.2 L117.7,622.8 L133.2,622.3 L148.7,621.7 L166.4,621.7 L188.5,621.7 L201.8,620.8 L224.0,620.8 L232.8,621.2 L252.7,620.8 L266.0,619.4 L277.1,618.3 L285.9,618.1 L290.4,616.8 L297.0,615.9 L301.4,613.9 L304.8,611.0 L307.0,612.6 L309.2,611.5 L314.7,613.7 L321.4,612.1 L324.7,608.8 L328.0,608.4 L332.0,605.5 L335.1,608.8 L339.1,607.3 L344.6,604.4 L347.9,605.5 L352.3,607.0 L356.8,604.6 L361.2,604.8 L365.6,603.3 L371.2,607.5 L375.6,605.5 L377.8,606.6 L380.7,604.6 L387.8,612.1 L391.1,611.5 L394.4,612.6 L396.6,611.7 L399.9,613.2 L403.3,611.0 L407.7,613.2 L414.3,612.6 L425.4,614.3 L432.0,610.4 L435.4,611.5 L438.7,608.8 L440.0,609.5 L444.4,608.2 L451.1,607.7 L454.4,606.6 L457.7,608.8 L462.1,608.8 L465.5,609.9 L468.8,610.6 L472.1,607.7 L478.7,604.4 L484.3,603.3 L488.7,603.7 L494.2,602.2 L499.8,604.8 L504.2,605.1 L508.6,605.5 L510.8,607.7 L517.5,609.0 L523.0,607.3 L526.3,608.8 L533.0,610.6 L537.4,610.4 L540.7,612.1 L546.3,611.7 L550.7,609.9 L555.1,610.4 L558.4,611.7 L564.0,609.9 L566.2,611.5 L572.8,611.0 L577.2,609.9 L582.8,608.8 L588.3,609.9 L592.7,611.3 L599.4,611.0 L604.9,611.7 L609.3,614.3 L614.9,613.9 L621.5,614.3 L627.0,613.9 L632.6,617.7 L639.2,618.1 L650.3,617.7 L659.1,616.6 L670.2,617.0 L679.1,617.7 L687.9,617.2 L696.8,618.1 L705.6,618.1 L723.3,617.7 L725.5,618.8 L738.8,618.8 L749.9,618.8 L763.2,618.8 L767.6,617.0 L772.0,616.6 L780.0,616.6 L788.9,616.4 L799.9,617.5 L806.6,615.5 L819.8,614.8 L828.7,615.3 L837.6,614.8 L859.7,616.0 L866.3,614.4 L899.5,614.8 L904.0,616.0 L912.8,616.0 L934.9,615.3 L943.8,613.7 L948.2,612.6 L957.1,612.0 L965.9,611.5 L971.5,609.8 L979.2,610.4 L985.9,609.8 L993.6,608.9 L996.9,610.4 L1002.5,610.9 L1010.2,609.8 L1016.9,607.5 L1022.4,607.1 L1025.7,603.8 L1030.1,601.1 L1034.6,600.5 L1037.9,602.7 L1043.4,600.5 L1047.8,601.6 L1052.3,600.9 L1055.6,603.3 L1061.1,602.2 L1065.5,604.2 L1070.0,603.1 L1076.6,601.1 L1085.5,601.6 L1088.8,600.5 L1096.5,602.7 L1103.2,603.8 L1107.6,605.3 L1113.1,602.7 L1120.0,600.8 L1126.8,605.3 L1132.5,604.2 L1138.2,603.0 L1141.6,604.2 L1147.3,606.0 L1154.2,604.2 L1161.0,602.6 L1167.9,603.7 L1174.7,601.4 L1180.4,600.3 L1183.8,599.6 L1187.2,595.5 L1190.0,593.3 L1191.8,592.9 L1194.6,590.6 L1196.8,592.9 L1198.7,591.5 L1201.9,591.5 L1204.6,590.1 L1206.9,589.7 L1210.5,587.9 L1212.3,591.5 L1216.0,591.0 L1219.2,592.9 L1223.3,589.7 L1226.5,592.4 L1231.0,588.8 L1234.7,588.6 L1237.9,588.8 L1239.7,590.1 L1242.9,592.0 L1246.5,592.0 L1253.8,591.7 L1256.5,595.1 L1260.6,593.3 L1262.9,596.5 L1267.5,595.1 L1273.0,594.7 L1275.7,596.1 L1279.3,596.5 L1281.6,598.3 L1284.8,595.6 L1287.5,596.1 L1291.2,592.4 L1297.6,592.0 L1301.7,588.3 L1304.9,589.2 L1309.4,586.2 L1314.0,588.3 L1315.8,587.9 L1318.5,589.7 L1321.3,586.9 L1324.9,588.3 L1330.0,588.8 L1331.9,587.8 L1332.7,587.9 L1335.0,588.3 L1336.8,587.1 L1339.1,587.4 L1341.9,584.2 L1344.6,584.0 L1348.2,584.7 L1351.9,583.7 L1355.5,586.2 L1361.0,583.3 L1364.6,584.7 L1367.4,584.9 L1370.1,586.5 L1373.8,587.4 L1376.5,586.8 L1379.7,586.5 L1382.0,584.7 L1386.5,584.9 L1389.7,587.4 L1395.2,582.2 L1397.9,582.8 L1399.7,586.0 L1401.1,585.6 L1403.8,587.9 L1407.5,586.5 L1409.3,585.1 L1412.0,586.9 L1415.2,589.7 L1418.4,588.3 L1421.2,592.0 L1425.7,595.6 L1428.5,593.8 L1433.9,593.8 L1437.1,593.3 L1439.4,594.7 L1442.6,595.3 L1445.8,594.7 L1448.5,595.1 L1451.2,593.8 L1454.0,592.4 L1456.7,593.8 L1459.4,591.0 L1461.3,592.2 L1463.5,594.7 L1464,635.5 L104,635.5 Z" fill="#202a48" clip-path="url(#selclip)"/>
<path d="M104.4,621.6 L111.1,622.1 L113.3,623.2 L117.7,622.8 L133.2,622.3 L148.7,621.7 L166.4,621.7 L188.5,621.7 L201.8,620.8 L224.0,620.8 L232.8,621.2 L252.7,620.8 L266.0,619.4 L277.1,618.3 L285.9,618.1 L290.4,616.8 L297.0,615.9 L301.4,613.9 L304.8,611.0 L307.0,612.6 L309.2,611.5 L314.7,613.7 L321.4,612.1 L324.7,608.8 L328.0,608.4 L332.0,605.5 L335.1,608.8 L339.1,607.3 L344.6,604.4 L347.9,605.5 L352.3,607.0 L356.8,604.6 L361.2,604.8 L365.6,603.3 L371.2,607.5 L375.6,605.5 L377.8,606.6 L380.7,604.6 L387.8,612.1 L391.1,611.5 L394.4,612.6 L396.6,611.7 L399.9,613.2 L403.3,611.0 L407.7,613.2 L414.3,612.6 L425.4,614.3 L432.0,610.4 L435.4,611.5 L438.7,608.8 L440.0,609.5 L444.4,608.2 L451.1,607.7 L454.4,606.6 L457.7,608.8 L462.1,608.8 L465.5,609.9 L468.8,610.6 L472.1,607.7 L478.7,604.4 L484.3,603.3 L488.7,603.7 L494.2,602.2 L499.8,604.8 L504.2,605.1 L508.6,605.5 L510.8,607.7 L517.5,609.0 L523.0,607.3 L526.3,608.8 L533.0,610.6 L537.4,610.4 L540.7,612.1 L546.3,611.7 L550.7,609.9 L555.1,610.4 L558.4,611.7 L564.0,609.9 L566.2,611.5 L572.8,611.0 L577.2,609.9 L582.8,608.8 L588.3,609.9 L592.7,611.3 L599.4,611.0 L604.9,611.7 L609.3,614.3 L614.9,613.9 L621.5,614.3 L627.0,613.9 L632.6,617.7 L639.2,618.1 L650.3,617.7 L659.1,616.6 L670.2,617.0 L679.1,617.7 L687.9,617.2 L696.8,618.1 L705.6,618.1 L723.3,617.7 L725.5,618.8 L738.8,618.8 L749.9,618.8 L763.2,618.8 L767.6,617.0 L772.0,616.6 L780.0,616.6 L788.9,616.4 L799.9,617.5 L806.6,615.5 L819.8,614.8 L828.7,615.3 L837.6,614.8 L859.7,616.0 L866.3,614.4 L899.5,614.8 L904.0,616.0 L912.8,616.0 L934.9,615.3 L943.8,613.7 L948.2,612.6 L957.1,612.0 L965.9,611.5 L971.5,609.8 L979.2,610.4 L985.9,609.8 L993.6,608.9 L996.9,610.4 L1002.5,610.9 L1010.2,609.8 L1016.9,607.5 L1022.4,607.1 L1025.7,603.8 L1030.1,601.1 L1034.6,600.5 L1037.9,602.7 L1043.4,600.5 L1047.8,601.6 L1052.3,600.9 L1055.6,603.3 L1061.1,602.2 L1065.5,604.2 L1070.0,603.1 L1076.6,601.1 L1085.5,601.6 L1088.8,600.5 L1096.5,602.7 L1103.2,603.8 L1107.6,605.3 L1113.1,602.7 L1120.0,600.8 L1126.8,605.3 L1132.5,604.2 L1138.2,603.0 L1141.6,604.2 L1147.3,606.0 L1154.2,604.2 L1161.0,602.6 L1167.9,603.7 L1174.7,601.4 L1180.4,600.3 L1183.8,599.6 L1187.2,595.5 L1190.0,593.3 L1191.8,592.9 L1194.6,590.6 L1196.8,592.9 L1198.7,591.5 L1201.9,591.5 L1204.6,590.1 L1206.9,589.7 L1210.5,587.9 L1212.3,591.5 L1216.0,591.0 L1219.2,592.9 L1223.3,589.7 L1226.5,592.4 L1231.0,588.8 L1234.7,588.6 L1237.9,588.8 L1239.7,590.1 L1242.9,592.0 L1246.5,592.0 L1253.8,591.7 L1256.5,595.1 L1260.6,593.3 L1262.9,596.5 L1267.5,595.1 L1273.0,594.7 L1275.7,596.1 L1279.3,596.5 L1281.6,598.3 L1284.8,595.6 L1287.5,596.1 L1291.2,592.4 L1297.6,592.0 L1301.7,588.3 L1304.9,589.2 L1309.4,586.2 L1314.0,588.3 L1315.8,587.9 L1318.5,589.7 L1321.3,586.9 L1324.9,588.3 L1330.0,588.8 L1331.9,587.8 L1332.7,587.9 L1335.0,588.3 L1336.8,587.1 L1339.1,587.4 L1341.9,584.2 L1344.6,584.0 L1348.2,584.7 L1351.9,583.7 L1355.5,586.2 L1361.0,583.3 L1364.6,584.7 L1367.4,584.9 L1370.1,586.5 L1373.8,587.4 L1376.5,586.8 L1379.7,586.5 L1382.0,584.7 L1386.5,584.9 L1389.7,587.4 L1395.2,582.2 L1397.9,582.8 L1399.7,586.0 L1401.1,585.6 L1403.8,587.9 L1407.5,586.5 L1409.3,585.1 L1412.0,586.9 L1415.2,589.7 L1418.4,588.3 L1421.2,592.0 L1425.7,595.6 L1428.5,593.8 L1433.9,593.8 L1437.1,593.3 L1439.4,594.7 L1442.6,595.3 L1445.8,594.7 L1448.5,595.1 L1451.2,593.8 L1454.0,592.4 L1456.7,593.8 L1459.4,591.0 L1461.3,592.2 L1463.5,594.7" fill="none" stroke="#3a5898" stroke-width="1"/>
<path d="M104.4,621.6 L111.1,622.1 L113.3,623.2 L117.7,622.8 L133.2,622.3 L148.7,621.7 L166.4,621.7 L188.5,621.7 L201.8,620.8 L224.0,620.8 L232.8,621.2 L252.7,620.8 L266.0,619.4 L277.1,618.3 L285.9,618.1 L290.4,616.8 L297.0,615.9 L301.4,613.9 L304.8,611.0 L307.0,612.6 L309.2,611.5 L314.7,613.7 L321.4,612.1 L324.7,608.8 L328.0,608.4 L332.0,605.5 L335.1,608.8 L339.1,607.3 L344.6,604.4 L347.9,605.5 L352.3,607.0 L356.8,604.6 L361.2,604.8 L365.6,603.3 L371.2,607.5 L375.6,605.5 L377.8,606.6 L380.7,604.6 L387.8,612.1 L391.1,611.5 L394.4,612.6 L396.6,611.7 L399.9,613.2 L403.3,611.0 L407.7,613.2 L414.3,612.6 L425.4,614.3 L432.0,610.4 L435.4,611.5 L438.7,608.8 L440.0,609.5 L444.4,608.2 L451.1,607.7 L454.4,606.6 L457.7,608.8 L462.1,608.8 L465.5,609.9 L468.8,610.6 L472.1,607.7 L478.7,604.4 L484.3,603.3 L488.7,603.7 L494.2,602.2 L499.8,604.8 L504.2,605.1 L508.6,605.5 L510.8,607.7 L517.5,609.0 L523.0,607.3 L526.3,608.8 L533.0,610.6 L537.4,610.4 L540.7,612.1 L546.3,611.7 L550.7,609.9 L555.1,610.4 L558.4,611.7 L564.0,609.9 L566.2,611.5 L572.8,611.0 L577.2,609.9 L582.8,608.8 L588.3,609.9 L592.7,611.3 L599.4,611.0 L604.9,611.7 L609.3,614.3 L614.9,613.9 L621.5,614.3 L627.0,613.9 L632.6,617.7 L639.2,618.1 L650.3,617.7 L659.1,616.6 L670.2,617.0 L679.1,617.7 L687.9,617.2 L696.8,618.1 L705.6,618.1 L723.3,617.7 L725.5,618.8 L738.8,618.8 L749.9,618.8 L763.2,618.8 L767.6,617.0 L772.0,616.6 L780.0,616.6 L788.9,616.4 L799.9,617.5 L806.6,615.5 L819.8,614.8 L828.7,615.3 L837.6,614.8 L859.7,616.0 L866.3,614.4 L899.5,614.8 L904.0,616.0 L912.8,616.0 L934.9,615.3 L943.8,613.7 L948.2,612.6 L957.1,612.0 L965.9,611.5 L971.5,609.8 L979.2,610.4 L985.9,609.8 L993.6,608.9 L996.9,610.4 L1002.5,610.9 L1010.2,609.8 L1016.9,607.5 L1022.4,607.1 L1025.7,603.8 L1030.1,601.1 L1034.6,600.5 L1037.9,602.7 L1043.4,600.5 L1047.8,601.6 L1052.3,600.9 L1055.6,603.3 L1061.1,602.2 L1065.5,604.2 L1070.0,603.1 L1076.6,601.1 L1085.5,601.6 L1088.8,600.5 L1096.5,602.7 L1103.2,603.8 L1107.6,605.3 L1113.1,602.7 L1120.0,600.8 L1126.8,605.3 L1132.5,604.2 L1138.2,603.0 L1141.6,604.2 L1147.3,606.0 L1154.2,604.2 L1161.0,602.6 L1167.9,603.7 L1174.7,601.4 L1180.4,600.3 L1183.8,599.6 L1187.2,595.5 L1190.0,593.3 L1191.8,592.9 L1194.6,590.6 L1196.8,592.9 L1198.7,591.5 L1201.9,591.5 L1204.6,590.1 L1206.9,589.7 L1210.5,587.9 L1212.3,591.5 L1216.0,591.0 L1219.2,592.9 L1223.3,589.7 L1226.5,592.4 L1231.0,588.8 L1234.7,588.6 L1237.9,588.8 L1239.7,590.1 L1242.9,592.0 L1246.5,592.0 L1253.8,591.7 L1256.5,595.1 L1260.6,593.3 L1262.9,596.5 L1267.5,595.1 L1273.0,594.7 L1275.7,596.1 L1279.3,596.5 L1281.6,598.3 L1284.8,595.6 L1287.5,596.1 L1291.2,592.4 L1297.6,592.0 L1301.7,588.3 L1304.9,589.2 L1309.4,586.2 L1314.0,588.3 L1315.8,587.9 L1318.5,589.7 L1321.3,586.9 L1324.9,588.3 L1330.0,588.8 L1331.9,587.8 L1332.7,587.9 L1335.0,588.3 L1336.8,587.1 L1339.1,587.4 L1341.9,584.2 L1344.6,584.0 L1348.2,584.7 L1351.9,583.7 L1355.5,586.2 L1361.0,583.3 L1364.6,584.7 L1367.4,584.9 L1370.1,586.5 L1373.8,587.4 L1376.5,586.8 L1379.7,586.5 L1382.0,584.7 L1386.5,584.9 L1389.7,587.4 L1395.2,582.2 L1397.9,582.8 L1399.7,586.0 L1401.1,585.6 L1403.8,587.9 L1407.5,586.5 L1409.3,585.1 L1412.0,586.9 L1415.2,589.7 L1418.4,588.3 L1421.2,592.0 L1425.7,595.6 L1428.5,593.8 L1433.9,593.8 L1437.1,593.3 L1439.4,594.7 L1442.6,595.3 L1445.8,594.7 L1448.5,595.1 L1451.2,593.8 L1454.0,592.4 L1456.7,593.8 L1459.4,591.0 L1461.3,592.2 L1463.5,594.7" fill="none" stroke="#5a78b8" stroke-width="1" clip-path="url(#selclip)"/>
<rect x="1189.9" y="594.5" width="16" height="19" rx="7" fill="#30344a"/>
<rect x="1194.9" y="600.5" width="1.5" height="7.5" fill="#9c9ca4"/>
<rect x="1199.4" y="600.5" width="1.5" height="7.5" fill="#9c9ca4"/>
<rect x="1455.0" y="594.5" width="16" height="19" rx="7" fill="#30344a"/>
<rect x="1460.0" y="600.5" width="1.5" height="7.5" fill="#9c9ca4"/>
<rect x="1464.5" y="600.5" width="1.5" height="7.5" fill="#9c9ca4"/>
</svg>
<div class="t" style="left:14px;top:14px;font-size:22px;font-weight:bold;color:#f2f3f5;letter-spacing:-0.3px">Bitcoin Open Interest (USD)</div>
<div class="t" style="left:688px;top:72px;width:11px;height:11px;background:#e8c05a;border-radius:1px"></div>
<div class="t" style="left:704.5px;top:69px;font-size:13px;letter-spacing:-0.1px;color:#eeeeee">BTC Price</div>
<div class="t" style="left:776px;top:72px;width:11px;height:11px;background:#22c08a;border-radius:1px"></div>
<div class="t" style="left:792.5px;top:69px;font-size:13px;letter-spacing:0.25px;color:#eeeeee">Open Interest</div>
<div class="t" style="left:43px;top:275.5px;width:55px;height:24.5px;background:#000;border-radius:3px"></div>
<div class="t" style="left:50.5px;top:281px;font-size:12.5px;letter-spacing:0.3px;color:#fff;-webkit-text-stroke:0.35px #fff">58.97B</div>
<div class="t" style="left:1465px;top:275.7px;width:80px;height:24.3px;background:#000;border-radius:3px"></div>
<div class="t" style="left:1473px;top:280px;font-size:12.5px;color:#fff;-webkit-text-stroke:0.35px #fff">104,825.19</div>
<div class="t" style="left:1398px;top:551px;width:124px;height:23.5px;background:#000;border-radius:3px"></div>
<div class="t" style="left:1405.5px;top:555px;font-size:12.5px;letter-spacing:0.17px;color:#fff;-webkit-text-stroke:0.35px #fff">23 Jan 2026, 03:00</div>
<div class="t" style="left:1202px;top:311.4px;width:234px;height:115px;background:#060709;border-radius:8px"></div>
<div class="t" style="left:1219px;top:331.5px;font-size:16px;color:#fff;-webkit-text-stroke:0.3px #fff">23 Jan 2026, 03:00</div>
<div class="t" style="left:1219px;top:370px;width:6px;height:6px;border-radius:50%;background:#e8c05a;border:2px solid #e8e8e8"></div>
<div class="t" style="left:1235px;top:367px;font-size:16px;color:#dcdcdc">BTC Price</div>
<div class="t" style="left:1343px;top:366.5px;width:76px;text-align:right;font-size:16px;color:#fff;-webkit-text-stroke:0.3px #fff">$89481.00</div>
<div class="t" style="left:1219px;top:394px;width:6px;height:6px;border-radius:50%;background:#22c08a;border:2px solid #e8e8e8"></div>
<div class="t" style="left:1235px;top:391px;font-size:16px;letter-spacing:0.4px;color:#dcdcdc">Open Interest</div>
<div class="t" style="left:1343px;top:390.5px;width:76px;text-align:right;font-size:16px;color:#fff;-webkit-text-stroke:0.3px #fff">$59.64B</div>
</body></html>
